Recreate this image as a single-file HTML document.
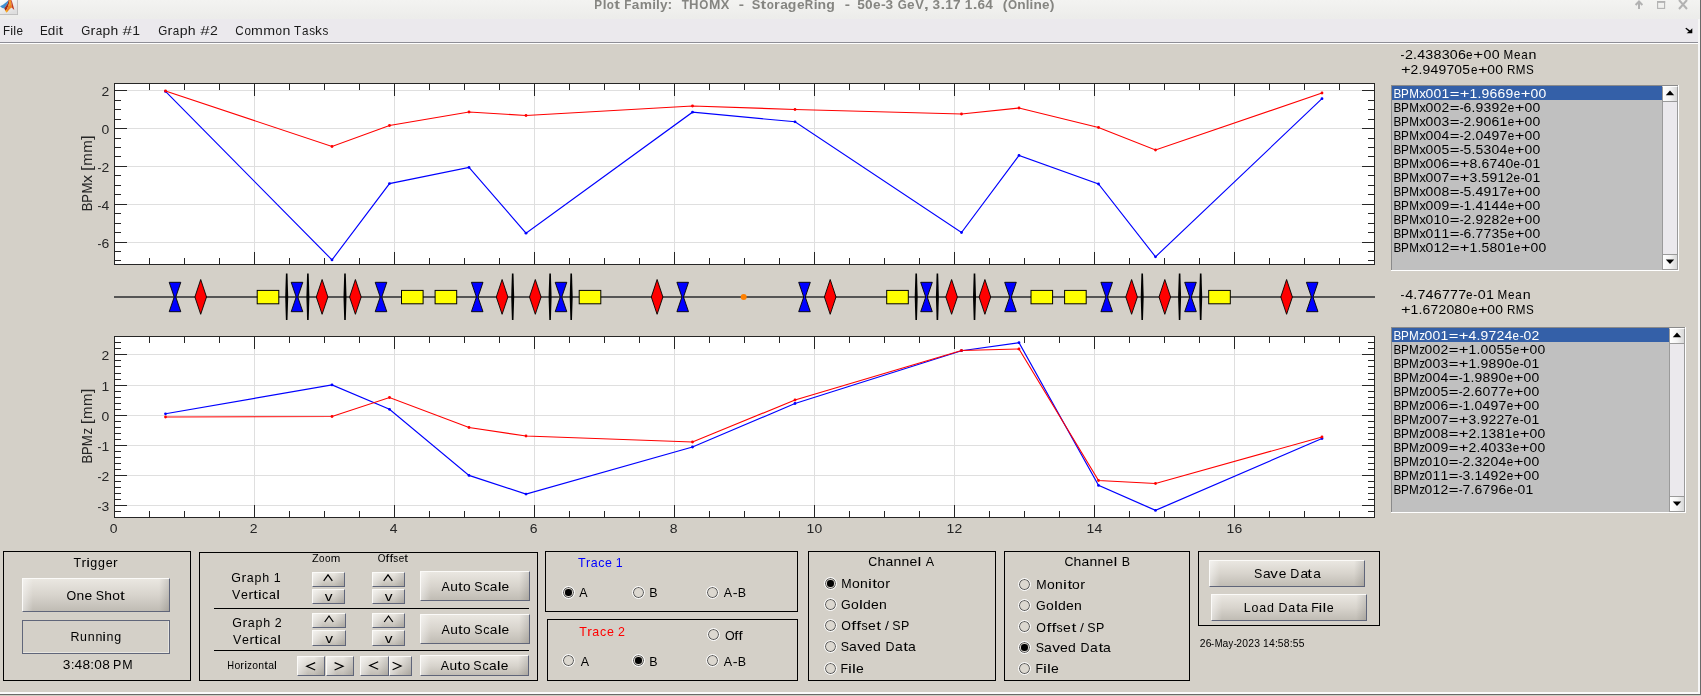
<!DOCTYPE html>
<html><head><meta charset="utf-8"><title>Plot Family</title>
<style>
html,body{margin:0;padding:0;}
body{width:1701px;height:696px;overflow:hidden;background:#d4d0c8;position:relative;font-family:"Liberation Sans",sans-serif;}
#w{position:absolute;left:0;top:0;width:1701px;height:696px;}
#txt{position:absolute;left:0;top:0;will-change:transform;font-family:"Liberation Sans",sans-serif;white-space:pre;}
#txt text{white-space:pre;}
#title{position:absolute;left:0;top:0;width:1701px;height:19px;background:linear-gradient(#f3f3f1,#ececea);}
#menu{position:absolute;left:0;top:19px;width:1700px;height:23px;background:#ebe9ed;}
#menuline{position:absolute;left:0;top:42px;width:1698px;height:1px;background:#8e8e96;}
#menuline2{position:absolute;left:0;top:43px;width:1698px;height:1px;background:#fff;}
.btn{box-sizing:border-box;border:1px solid;border-color:#fbfaf8 #5f6579 #5f6579 #fbfaf8;
 background:linear-gradient(90deg,rgba(255,255,255,.45),rgba(255,255,255,0) 10px,rgba(0,0,0,0) calc(100% - 10px),rgba(0,0,0,.12)),linear-gradient(#eae7e1,#d7d3cc 52%,#c0bcb4);}
.rad{position:absolute;width:13px;height:13px;box-sizing:border-box;border-radius:50%;border:1px solid #fff;background:#dcd8d0;box-shadow:inset 0 0 0 1px #5c5c5c;}
.rad i{position:absolute;left:2.3px;top:2.3px;width:6.4px;height:6.4px;border-radius:50%;background:#000;}
</style></head>
<body>
<div id="title"></div>
<div id="menu"></div><div id="menuline"></div><div id="menuline2"></div>
<svg style="position:absolute;left:0;top:0" width="20" height="16" viewBox="0 0 20 16">
<defs><linearGradient id="ig" x1="0" y1="0" x2="0.6" y2="1"><stop offset="0" stop-color="#ffffff"/><stop offset="1" stop-color="#dedede"/></linearGradient></defs>
<rect x="0" y="0" width="18" height="15" fill="#b9b9b9"/><rect x="0" y="0" width="17.2" height="14.2" fill="url(#ig)"/>
<path d="M0 6.2 L3 4.8 L6.5 2 L8.6 0 L8 3 L6 6 L4.5 8.6 L2.2 8 Z" fill="#3f8fd2"/>
<path d="M4.3 8.6 L6 6 L8 3 L8.6 0 H9.7 L8.6 5 L7 9 L5.6 11 Z" fill="#9e2718"/>
<path d="M5.4 10.8 L7 9 L8.6 5 L9.6 0 H10.9 L11.5 4 L12.1 7.6 L10.2 8.4 L8 11 L6.5 12.6 Z" fill="#ee7f22"/>
<path d="M9.4 1 L10.4 1 L10.6 5 L9.2 6 Z" fill="#f3ae2c"/>
<path d="M5.3 10.6 L6.5 12.6 L7.6 11.3 L6.6 10 Z" fill="#f6b31e"/>
<path d="M10.9 0 L11.7 0.6 L13 5 L14.3 9.8 L13 9 L12.1 7.6 L11.5 4 Z" fill="#c23a23"/>
</svg>
<svg style="position:absolute;left:1620px;top:0" width="81" height="18" viewBox="1620 0 81 18">
<g stroke="#b2b2b2" stroke-width="2" fill="none">
<path d="M1639 9 V1.5 M1635.6 5 L1639 1.5 L1642.4 5"/>
<rect x="1657.6" y="1.8" width="7" height="6.6" stroke-width="1.1"/><path d="M1657 1.9 H1665.2" stroke-width="1.8"/>
<path d="M1679 0 L1687 9 M1687 0 L1679 9"/>
</g></svg>
<svg style="position:absolute;left:1683px;top:26px" width="12" height="10" viewBox="1683 26 12 10"><path d="M1685.3 28.6 L1686.3 27.8 L1690 30.6 L1692.3 28.2 V33.2 H1686.6 L1688.8 31.6 Z" fill="#000"/></svg>
<svg style="position:absolute;left:0;top:0" width="1701" height="696" viewBox="0 0 1701 696">
<rect x="114.5" y="83.5" width="1260.0" height="181.0" fill="#fff"/>
<path d="M254.5 83.5 V264.5 M394.5 83.5 V264.5 M534.5 83.5 V264.5 M674.5 83.5 V264.5 M814.5 83.5 V264.5 M954.5 83.5 V264.5 M1094.5 83.5 V264.5 M1234.5 83.5 V264.5 M114.5 90.5 H1374.5 M114.5 128.5 H1374.5 M114.5 166.5 H1374.5 M114.5 204.5 H1374.5 M114.5 242.5 H1374.5" stroke="#dfdfdf" stroke-width="1" fill="none" shape-rendering="crispEdges"/>
<path d="M149.5 83.5 v6.5 M149.5 264.5 v-6.5 M184.5 83.5 v6.5 M184.5 264.5 v-6.5 M219.5 83.5 v6.5 M219.5 264.5 v-6.5 M254.5 83.5 v12.5 M254.5 264.5 v-12.5 M289.5 83.5 v6.5 M289.5 264.5 v-6.5 M324.5 83.5 v6.5 M324.5 264.5 v-6.5 M359.5 83.5 v6.5 M359.5 264.5 v-6.5 M394.5 83.5 v12.5 M394.5 264.5 v-12.5 M429.5 83.5 v6.5 M429.5 264.5 v-6.5 M464.5 83.5 v6.5 M464.5 264.5 v-6.5 M499.5 83.5 v6.5 M499.5 264.5 v-6.5 M534.5 83.5 v12.5 M534.5 264.5 v-12.5 M569.5 83.5 v6.5 M569.5 264.5 v-6.5 M604.5 83.5 v6.5 M604.5 264.5 v-6.5 M639.5 83.5 v6.5 M639.5 264.5 v-6.5 M674.5 83.5 v12.5 M674.5 264.5 v-12.5 M709.5 83.5 v6.5 M709.5 264.5 v-6.5 M744.5 83.5 v6.5 M744.5 264.5 v-6.5 M779.5 83.5 v6.5 M779.5 264.5 v-6.5 M814.5 83.5 v12.5 M814.5 264.5 v-12.5 M849.5 83.5 v6.5 M849.5 264.5 v-6.5 M884.5 83.5 v6.5 M884.5 264.5 v-6.5 M919.5 83.5 v6.5 M919.5 264.5 v-6.5 M954.5 83.5 v12.5 M954.5 264.5 v-12.5 M989.5 83.5 v6.5 M989.5 264.5 v-6.5 M1024.5 83.5 v6.5 M1024.5 264.5 v-6.5 M1059.5 83.5 v6.5 M1059.5 264.5 v-6.5 M1094.5 83.5 v12.5 M1094.5 264.5 v-12.5 M1129.5 83.5 v6.5 M1129.5 264.5 v-6.5 M1164.5 83.5 v6.5 M1164.5 264.5 v-6.5 M1199.5 83.5 v6.5 M1199.5 264.5 v-6.5 M1234.5 83.5 v12.5 M1234.5 264.5 v-12.5 M1269.5 83.5 v6.5 M1269.5 264.5 v-6.5 M1304.5 83.5 v6.5 M1304.5 264.5 v-6.5 M1339.5 83.5 v6.5 M1339.5 264.5 v-6.5 M114.5 260.5 h6.5 M1374.5 260.5 h-6.5 M114.5 251.5 h6.5 M1374.5 251.5 h-6.5 M114.5 242.5 h12.5 M1374.5 242.5 h-12.5 M114.5 232.5 h6.5 M1374.5 232.5 h-6.5 M114.5 223.5 h6.5 M1374.5 223.5 h-6.5 M114.5 213.5 h6.5 M1374.5 213.5 h-6.5 M114.5 204.5 h12.5 M1374.5 204.5 h-12.5 M114.5 194.5 h6.5 M1374.5 194.5 h-6.5 M114.5 185.5 h6.5 M1374.5 185.5 h-6.5 M114.5 175.5 h6.5 M1374.5 175.5 h-6.5 M114.5 166.5 h12.5 M1374.5 166.5 h-12.5 M114.5 156.5 h6.5 M1374.5 156.5 h-6.5 M114.5 147.5 h6.5 M1374.5 147.5 h-6.5 M114.5 138.5 h6.5 M1374.5 138.5 h-6.5 M114.5 128.5 h12.5 M1374.5 128.5 h-12.5 M114.5 119.5 h6.5 M1374.5 119.5 h-6.5 M114.5 109.5 h6.5 M1374.5 109.5 h-6.5 M114.5 100.5 h6.5 M1374.5 100.5 h-6.5 M114.5 90.5 h12.5 M1374.5 90.5 h-12.5" stroke="#262626" stroke-width="1" fill="none" shape-rendering="crispEdges"/>
<rect x="114.5" y="83.5" width="1260.0" height="181.0" fill="none" stroke="#262626" stroke-width="1" shape-rendering="crispEdges"/>
<polyline points="165.5,91.4 332.0,259.9 389.5,183.6 469.0,167.4 526.0,233.2 692.5,112.2 795.0,121.8 961.5,232.5 1019.0,155.4 1098.5,184.0 1155.5,256.8 1322.0,98.7" fill="none" stroke="#0000ff" stroke-width="1.15"/><circle cx="165.5" cy="91.4" r="1.4" fill="#0000ff"/><circle cx="332.0" cy="259.9" r="1.4" fill="#0000ff"/><circle cx="389.5" cy="183.6" r="1.4" fill="#0000ff"/><circle cx="469.0" cy="167.4" r="1.4" fill="#0000ff"/><circle cx="526.0" cy="233.2" r="1.4" fill="#0000ff"/><circle cx="692.5" cy="112.2" r="1.4" fill="#0000ff"/><circle cx="795.0" cy="121.8" r="1.4" fill="#0000ff"/><circle cx="961.5" cy="232.5" r="1.4" fill="#0000ff"/><circle cx="1019.0" cy="155.4" r="1.4" fill="#0000ff"/><circle cx="1098.5" cy="184.0" r="1.4" fill="#0000ff"/><circle cx="1155.5" cy="256.8" r="1.4" fill="#0000ff"/><circle cx="1322.0" cy="98.7" r="1.4" fill="#0000ff"/>
<polyline points="165.5,91.0 332.0,146.5 389.5,125.5 469.0,112.0 526.0,115.5 692.5,106.0 795.0,109.5 961.5,114.0 1019.0,108.0 1098.5,127.5 1155.5,150.0 1322.0,93.0" fill="none" stroke="#ff0000" stroke-width="1.15"/><circle cx="165.5" cy="91.0" r="1.4" fill="#ff0000"/><circle cx="332.0" cy="146.5" r="1.4" fill="#ff0000"/><circle cx="389.5" cy="125.5" r="1.4" fill="#ff0000"/><circle cx="469.0" cy="112.0" r="1.4" fill="#ff0000"/><circle cx="526.0" cy="115.5" r="1.4" fill="#ff0000"/><circle cx="692.5" cy="106.0" r="1.4" fill="#ff0000"/><circle cx="795.0" cy="109.5" r="1.4" fill="#ff0000"/><circle cx="961.5" cy="114.0" r="1.4" fill="#ff0000"/><circle cx="1019.0" cy="108.0" r="1.4" fill="#ff0000"/><circle cx="1098.5" cy="127.5" r="1.4" fill="#ff0000"/><circle cx="1155.5" cy="150.0" r="1.4" fill="#ff0000"/><circle cx="1322.0" cy="93.0" r="1.4" fill="#ff0000"/>
<rect x="114.5" y="336.5" width="1260.0" height="181.0" fill="#fff"/>
<path d="M254.5 336.5 V517.5 M394.5 336.5 V517.5 M534.5 336.5 V517.5 M674.5 336.5 V517.5 M814.5 336.5 V517.5 M954.5 336.5 V517.5 M1094.5 336.5 V517.5 M1234.5 336.5 V517.5 M114.5 354.5 H1374.5 M114.5 385.5 H1374.5 M114.5 415.5 H1374.5 M114.5 445.5 H1374.5 M114.5 475.5 H1374.5 M114.5 505.5 H1374.5" stroke="#dfdfdf" stroke-width="1" fill="none" shape-rendering="crispEdges"/>
<path d="M149.5 336.5 v6.5 M149.5 517.5 v-6.5 M184.5 336.5 v6.5 M184.5 517.5 v-6.5 M219.5 336.5 v6.5 M219.5 517.5 v-6.5 M254.5 336.5 v12.5 M254.5 517.5 v-12.5 M289.5 336.5 v6.5 M289.5 517.5 v-6.5 M324.5 336.5 v6.5 M324.5 517.5 v-6.5 M359.5 336.5 v6.5 M359.5 517.5 v-6.5 M394.5 336.5 v12.5 M394.5 517.5 v-12.5 M429.5 336.5 v6.5 M429.5 517.5 v-6.5 M464.5 336.5 v6.5 M464.5 517.5 v-6.5 M499.5 336.5 v6.5 M499.5 517.5 v-6.5 M534.5 336.5 v12.5 M534.5 517.5 v-12.5 M569.5 336.5 v6.5 M569.5 517.5 v-6.5 M604.5 336.5 v6.5 M604.5 517.5 v-6.5 M639.5 336.5 v6.5 M639.5 517.5 v-6.5 M674.5 336.5 v12.5 M674.5 517.5 v-12.5 M709.5 336.5 v6.5 M709.5 517.5 v-6.5 M744.5 336.5 v6.5 M744.5 517.5 v-6.5 M779.5 336.5 v6.5 M779.5 517.5 v-6.5 M814.5 336.5 v12.5 M814.5 517.5 v-12.5 M849.5 336.5 v6.5 M849.5 517.5 v-6.5 M884.5 336.5 v6.5 M884.5 517.5 v-6.5 M919.5 336.5 v6.5 M919.5 517.5 v-6.5 M954.5 336.5 v12.5 M954.5 517.5 v-12.5 M989.5 336.5 v6.5 M989.5 517.5 v-6.5 M1024.5 336.5 v6.5 M1024.5 517.5 v-6.5 M1059.5 336.5 v6.5 M1059.5 517.5 v-6.5 M1094.5 336.5 v12.5 M1094.5 517.5 v-12.5 M1129.5 336.5 v6.5 M1129.5 517.5 v-6.5 M1164.5 336.5 v6.5 M1164.5 517.5 v-6.5 M1199.5 336.5 v6.5 M1199.5 517.5 v-6.5 M1234.5 336.5 v12.5 M1234.5 517.5 v-12.5 M1269.5 336.5 v6.5 M1269.5 517.5 v-6.5 M1304.5 336.5 v6.5 M1304.5 517.5 v-6.5 M1339.5 336.5 v6.5 M1339.5 517.5 v-6.5 M114.5 511.5 h6.5 M1374.5 511.5 h-6.5 M114.5 505.5 h12.5 M1374.5 505.5 h-12.5 M114.5 499.5 h6.5 M1374.5 499.5 h-6.5 M114.5 493.5 h6.5 M1374.5 493.5 h-6.5 M114.5 487.5 h6.5 M1374.5 487.5 h-6.5 M114.5 481.5 h6.5 M1374.5 481.5 h-6.5 M114.5 475.5 h12.5 M1374.5 475.5 h-12.5 M114.5 469.5 h6.5 M1374.5 469.5 h-6.5 M114.5 463.5 h6.5 M1374.5 463.5 h-6.5 M114.5 457.5 h6.5 M1374.5 457.5 h-6.5 M114.5 451.5 h6.5 M1374.5 451.5 h-6.5 M114.5 445.5 h12.5 M1374.5 445.5 h-12.5 M114.5 439.5 h6.5 M1374.5 439.5 h-6.5 M114.5 433.5 h6.5 M1374.5 433.5 h-6.5 M114.5 427.5 h6.5 M1374.5 427.5 h-6.5 M114.5 421.5 h6.5 M1374.5 421.5 h-6.5 M114.5 415.5 h12.5 M1374.5 415.5 h-12.5 M114.5 409.5 h6.5 M1374.5 409.5 h-6.5 M114.5 403.5 h6.5 M1374.5 403.5 h-6.5 M114.5 397.5 h6.5 M1374.5 397.5 h-6.5 M114.5 391.5 h6.5 M1374.5 391.5 h-6.5 M114.5 385.5 h12.5 M1374.5 385.5 h-12.5 M114.5 379.5 h6.5 M1374.5 379.5 h-6.5 M114.5 373.5 h6.5 M1374.5 373.5 h-6.5 M114.5 366.5 h6.5 M1374.5 366.5 h-6.5 M114.5 360.5 h6.5 M1374.5 360.5 h-6.5 M114.5 354.5 h12.5 M1374.5 354.5 h-12.5 M114.5 348.5 h6.5 M1374.5 348.5 h-6.5 M114.5 342.5 h6.5 M1374.5 342.5 h-6.5" stroke="#262626" stroke-width="1" fill="none" shape-rendering="crispEdges"/>
<rect x="114.5" y="336.5" width="1260.0" height="181.0" fill="none" stroke="#262626" stroke-width="1" shape-rendering="crispEdges"/>
<polyline points="165.5,413.8 332.0,384.9 389.5,409.3 469.0,475.4 526.0,494.1 692.5,447.0 795.0,403.5 961.5,350.7 1019.0,342.7 1098.5,485.4 1155.5,510.4 1322.0,438.5" fill="none" stroke="#0000ff" stroke-width="1.15"/><circle cx="165.5" cy="413.8" r="1.4" fill="#0000ff"/><circle cx="332.0" cy="384.9" r="1.4" fill="#0000ff"/><circle cx="389.5" cy="409.3" r="1.4" fill="#0000ff"/><circle cx="469.0" cy="475.4" r="1.4" fill="#0000ff"/><circle cx="526.0" cy="494.1" r="1.4" fill="#0000ff"/><circle cx="692.5" cy="447.0" r="1.4" fill="#0000ff"/><circle cx="795.0" cy="403.5" r="1.4" fill="#0000ff"/><circle cx="961.5" cy="350.7" r="1.4" fill="#0000ff"/><circle cx="1019.0" cy="342.7" r="1.4" fill="#0000ff"/><circle cx="1098.5" cy="485.4" r="1.4" fill="#0000ff"/><circle cx="1155.5" cy="510.4" r="1.4" fill="#0000ff"/><circle cx="1322.0" cy="438.5" r="1.4" fill="#0000ff"/>
<polyline points="165.5,417.0 332.0,416.5 389.5,397.5 469.0,427.5 526.0,436.0 692.5,442.0 795.0,400.0 961.5,350.5 1019.0,349.0 1098.5,480.5 1155.5,483.5 1322.0,437.0" fill="none" stroke="#ff0000" stroke-width="1.15"/><circle cx="165.5" cy="417.0" r="1.4" fill="#ff0000"/><circle cx="332.0" cy="416.5" r="1.4" fill="#ff0000"/><circle cx="389.5" cy="397.5" r="1.4" fill="#ff0000"/><circle cx="469.0" cy="427.5" r="1.4" fill="#ff0000"/><circle cx="526.0" cy="436.0" r="1.4" fill="#ff0000"/><circle cx="692.5" cy="442.0" r="1.4" fill="#ff0000"/><circle cx="795.0" cy="400.0" r="1.4" fill="#ff0000"/><circle cx="961.5" cy="350.5" r="1.4" fill="#ff0000"/><circle cx="1019.0" cy="349.0" r="1.4" fill="#ff0000"/><circle cx="1098.5" cy="480.5" r="1.4" fill="#ff0000"/><circle cx="1155.5" cy="483.5" r="1.4" fill="#ff0000"/><circle cx="1322.0" cy="437.0" r="1.4" fill="#ff0000"/>
<path d="M114 297 H1375" stroke="#555" stroke-width="2" fill="none"/>
<path d="M169.2 282.3 H180.8 L175.8 297 L180.8 311.7 H169.2 L174.2 297 Z" fill="#0000ff" stroke="#000" stroke-width="0.9"/>
<path d="M200.7 279.5 L206.5 297 L200.7 314.3 L194.9 297 Z" fill="#ff0000" stroke="#000" stroke-width="0.9"/>
<rect x="257.2" y="290.4" width="21.6" height="13.4" fill="#ffff00" stroke="#000" stroke-width="1"/>
<path d="M291.2 282.3 H302.8 L297.8 297 L302.8 311.7 H291.2 L296.2 297 Z" fill="#0000ff" stroke="#000" stroke-width="0.9"/>
<path d="M322.1 279.5 L327.9 297 L322.1 314.3 L316.3 297 Z" fill="#ff0000" stroke="#000" stroke-width="0.9"/>
<path d="M355.4 279.5 L361.2 297 L355.4 314.3 L349.6 297 Z" fill="#ff0000" stroke="#000" stroke-width="0.9"/>
<path d="M375.2 282.3 H386.8 L381.8 297 L386.8 311.7 H375.2 L380.2 297 Z" fill="#0000ff" stroke="#000" stroke-width="0.9"/>
<rect x="401.5" y="290.4" width="21.6" height="13.4" fill="#ffff00" stroke="#000" stroke-width="1"/>
<rect x="435.1" y="290.4" width="21.6" height="13.4" fill="#ffff00" stroke="#000" stroke-width="1"/>
<path d="M471.4 282.3 H483.0 L478.0 297 L483.0 311.7 H471.4 L476.4 297 Z" fill="#0000ff" stroke="#000" stroke-width="0.9"/>
<path d="M502.1 279.5 L507.9 297 L502.1 314.3 L496.3 297 Z" fill="#ff0000" stroke="#000" stroke-width="0.9"/>
<path d="M535.3 279.5 L541.1 297 L535.3 314.3 L529.5 297 Z" fill="#ff0000" stroke="#000" stroke-width="0.9"/>
<path d="M555.2 282.3 H566.8 L561.8 297 L566.8 311.7 H555.2 L560.2 297 Z" fill="#0000ff" stroke="#000" stroke-width="0.9"/>
<rect x="579.2" y="290.4" width="21.6" height="13.4" fill="#ffff00" stroke="#000" stroke-width="1"/>
<path d="M657.1 279.5 L662.9 297 L657.1 314.3 L651.3 297 Z" fill="#ff0000" stroke="#000" stroke-width="0.9"/>
<path d="M676.9 282.3 H688.5 L683.5 297 L688.5 311.7 H676.9 L681.9 297 Z" fill="#0000ff" stroke="#000" stroke-width="0.9"/>
<path d="M798.7 282.3 H810.3 L805.3 297 L810.3 311.7 H798.7 L803.7 297 Z" fill="#0000ff" stroke="#000" stroke-width="0.9"/>
<path d="M830.2 279.5 L836.0 297 L830.2 314.3 L824.4 297 Z" fill="#ff0000" stroke="#000" stroke-width="0.9"/>
<rect x="886.7" y="290.4" width="21.6" height="13.4" fill="#ffff00" stroke="#000" stroke-width="1"/>
<path d="M920.7 282.3 H932.3 L927.3 297 L932.3 311.7 H920.7 L925.7 297 Z" fill="#0000ff" stroke="#000" stroke-width="0.9"/>
<path d="M951.6 279.5 L957.4 297 L951.6 314.3 L945.8 297 Z" fill="#ff0000" stroke="#000" stroke-width="0.9"/>
<path d="M984.9 279.5 L990.7 297 L984.9 314.3 L979.1 297 Z" fill="#ff0000" stroke="#000" stroke-width="0.9"/>
<path d="M1004.7 282.3 H1016.3 L1011.3 297 L1016.3 311.7 H1004.7 L1009.7 297 Z" fill="#0000ff" stroke="#000" stroke-width="0.9"/>
<rect x="1031.0" y="290.4" width="21.6" height="13.4" fill="#ffff00" stroke="#000" stroke-width="1"/>
<rect x="1064.6" y="290.4" width="21.6" height="13.4" fill="#ffff00" stroke="#000" stroke-width="1"/>
<path d="M1100.9 282.3 H1112.5 L1107.5 297 L1112.5 311.7 H1100.9 L1105.9 297 Z" fill="#0000ff" stroke="#000" stroke-width="0.9"/>
<path d="M1131.6 279.5 L1137.4 297 L1131.6 314.3 L1125.8 297 Z" fill="#ff0000" stroke="#000" stroke-width="0.9"/>
<path d="M1164.8 279.5 L1170.6 297 L1164.8 314.3 L1159.0 297 Z" fill="#ff0000" stroke="#000" stroke-width="0.9"/>
<path d="M1184.7 282.3 H1196.3 L1191.3 297 L1196.3 311.7 H1184.7 L1189.7 297 Z" fill="#0000ff" stroke="#000" stroke-width="0.9"/>
<rect x="1208.7" y="290.4" width="21.6" height="13.4" fill="#ffff00" stroke="#000" stroke-width="1"/>
<path d="M1286.6 279.5 L1292.4 297 L1286.6 314.3 L1280.8 297 Z" fill="#ff0000" stroke="#000" stroke-width="0.9"/>
<path d="M1306.4 282.3 H1318.0 L1313.0 297 L1318.0 311.7 H1306.4 L1311.4 297 Z" fill="#0000ff" stroke="#000" stroke-width="0.9"/>
<path d="M285.9 273.5 H287.5 L288.2 297 L287.5 320 H285.9 L285.2 297 Z" fill="#000"/>
<path d="M307.1 273.5 H308.7 L309.4 297 L308.7 320 H307.1 L306.4 297 Z" fill="#000"/>
<path d="M344.2 273.5 H345.8 L346.5 297 L345.8 320 H344.2 L343.5 297 Z" fill="#000"/>
<path d="M511.9 273.5 H513.5 L514.2 297 L513.5 320 H511.9 L511.2 297 Z" fill="#000"/>
<path d="M549.3 273.5 H550.9 L551.6 297 L550.9 320 H549.3 L548.6 297 Z" fill="#000"/>
<path d="M570.4 273.5 H572.0 L572.7 297 L572.0 320 H570.4 L569.7 297 Z" fill="#000"/>
<path d="M915.4 273.5 H917.0 L917.7 297 L917.0 320 H915.4 L914.7 297 Z" fill="#000"/>
<path d="M936.6 273.5 H938.2 L938.9 297 L938.2 320 H936.6 L935.9 297 Z" fill="#000"/>
<path d="M973.7 273.5 H975.3 L976.0 297 L975.3 320 H973.7 L973.0 297 Z" fill="#000"/>
<path d="M1141.4 273.5 H1143.0 L1143.7 297 L1143.0 320 H1141.4 L1140.7 297 Z" fill="#000"/>
<path d="M1178.8 273.5 H1180.4 L1181.1 297 L1180.4 320 H1178.8 L1178.1 297 Z" fill="#000"/>
<path d="M1199.9 273.5 H1201.5 L1202.2 297 L1201.5 320 H1199.9 L1199.2 297 Z" fill="#000"/>
<circle cx="743.7" cy="297" r="3" fill="#ff8000"/>
</svg>
<div style="position:absolute;left:1391px;top:85px;width:288px;height:186px;background:#fff;"></div>
<div style="position:absolute;left:1391px;top:85px;width:287px;height:185px;background:#8a8a8a;"></div>
<div style="position:absolute;left:1392px;top:86px;width:286px;height:184px;background:#c0c0c0;"></div>
<div style="position:absolute;left:1392px;top:86px;width:270px;height:14px;background:#3460a8;"></div>
<div style="position:absolute;left:1662px;top:86px;width:16px;height:184px;background:#ebe9ed;border-left:1px solid #9a9a9a;border-right:1px solid #9a9a9a;box-sizing:border-box;"></div>
<div style="position:absolute;left:1662px;top:86px;width:16px;height:16px;background:linear-gradient(90deg,#fff,#f4f4f4 50%,#d8d8d8);border:1px solid #9a9a9a;border-top-color:#fff;box-sizing:border-box;"></div>
<div style="position:absolute;left:1662px;top:254px;width:16px;height:16px;background:linear-gradient(90deg,#fff,#f4f4f4 50%,#d8d8d8);border:1px solid #9a9a9a;box-sizing:border-box;"></div>
<svg style="position:absolute;left:1662px;top:85px" width="16" height="185"><path d="M3.8 10.2 L8 5.6 L12.2 10.2 Z" fill="#000"/><path d="M3.8 174.4 L8 179 L12.2 174.4 Z" fill="#000"/></svg>
<div style="position:absolute;left:1391px;top:327px;width:295px;height:186px;background:#fff;"></div>
<div style="position:absolute;left:1391px;top:327px;width:294px;height:185px;background:#8a8a8a;"></div>
<div style="position:absolute;left:1392px;top:328px;width:293px;height:184px;background:#c0c0c0;"></div>
<div style="position:absolute;left:1392px;top:328px;width:277px;height:14px;background:#3460a8;"></div>
<div style="position:absolute;left:1669px;top:328px;width:16px;height:184px;background:#ebe9ed;border-left:1px solid #9a9a9a;border-right:1px solid #9a9a9a;box-sizing:border-box;"></div>
<div style="position:absolute;left:1669px;top:328px;width:16px;height:16px;background:linear-gradient(90deg,#fff,#f4f4f4 50%,#d8d8d8);border:1px solid #9a9a9a;border-top-color:#fff;box-sizing:border-box;"></div>
<div style="position:absolute;left:1669px;top:496px;width:16px;height:16px;background:linear-gradient(90deg,#fff,#f4f4f4 50%,#d8d8d8);border:1px solid #9a9a9a;box-sizing:border-box;"></div>
<svg style="position:absolute;left:1669px;top:327px" width="16" height="185"><path d="M3.8 10.2 L8 5.6 L12.2 10.2 Z" fill="#000"/><path d="M3.8 174.4 L8 179 L12.2 174.4 Z" fill="#000"/></svg>
<div style="position:absolute;left:3px;top:551px;width:188px;height:130px;border:1px solid #000;box-sizing:border-box;"></div>
<div class="btn" style="position:absolute;left:22px;top:578px;width:148px;height:34px;"></div>
<div style="position:absolute;left:22px;top:620px;width:148px;height:34px;border:1px solid #60667a;box-sizing:border-box;box-shadow:inset -1px -1px 0 #e8e6e0;"></div>
<div style="position:absolute;left:199px;top:552px;width:339px;height:129px;border:1px solid #000;box-sizing:border-box;"></div>
<div class="btn" style="position:absolute;left:312px;top:572px;width:33px;height:15px;"></div>
<div class="btn" style="position:absolute;left:312px;top:589px;width:33px;height:15px;"></div>
<div class="btn" style="position:absolute;left:372px;top:572px;width:33px;height:15px;"></div>
<div class="btn" style="position:absolute;left:372px;top:589px;width:33px;height:15px;"></div>
<div class="btn" style="position:absolute;left:420px;top:571px;width:110px;height:30px;"></div>
<div style="position:absolute;left:214px;top:608px;width:315px;height:1px;background:#000;"></div>
<div class="btn" style="position:absolute;left:312px;top:613px;width:34px;height:15px;"></div>
<div class="btn" style="position:absolute;left:312px;top:630px;width:34px;height:16px;"></div>
<div class="btn" style="position:absolute;left:372px;top:613px;width:33px;height:15px;"></div>
<div class="btn" style="position:absolute;left:372px;top:630px;width:33px;height:16px;"></div>
<div class="btn" style="position:absolute;left:420px;top:614px;width:110px;height:30px;"></div>
<div style="position:absolute;left:214px;top:650px;width:315px;height:1px;background:#000;"></div>
<div class="btn" style="position:absolute;left:297px;top:656px;width:28px;height:20px;"></div>
<div class="btn" style="position:absolute;left:326px;top:656px;width:28px;height:20px;"></div>
<div class="btn" style="position:absolute;left:360px;top:656px;width:29px;height:20px;"></div>
<div class="btn" style="position:absolute;left:389px;top:656px;width:23px;height:20px;"></div>
<div class="btn" style="position:absolute;left:420px;top:655px;width:109px;height:21px;"></div>
<svg style="position:absolute;left:0;top:0" width="1701" height="696" viewBox="0 0 1701 696"><path d="M323.7 580.8 L328.0 574.8 L332.3 580.8 M383.7 580.8 L388.0 574.8 L392.3 580.8 M324.7 622.0 L329.0 616.0 L333.3 622.0 M384.2 622.0 L388.5 616.0 L392.8 622.0 M315.2 662.6 L306.8 666.3 L315.2 670.0 M334.6 662.6 L343.0 666.3 L334.6 670.0 M378.2 661.8 L369.8 665.5 L378.2 669.2 M392.6 662.3 L401.0 666.0 L392.6 669.7" fill="none" stroke="#000" stroke-width="1.25" stroke-linejoin="miter"/></svg>
<div style="position:absolute;left:545px;top:551px;width:253px;height:61px;border:1px solid #000;box-sizing:border-box;"></div>
<div class="rad" style="left:562px;top:586px"><i></i></div>
<div class="rad" style="left:632px;top:586px"></div>
<div class="rad" style="left:706px;top:586px"></div>
<div style="position:absolute;left:547px;top:619px;width:251px;height:62px;border:1px solid #000;box-sizing:border-box;"></div>
<div class="rad" style="left:707px;top:628px"></div>
<div class="rad" style="left:562px;top:654px"></div>
<div class="rad" style="left:632px;top:654px"><i></i></div>
<div class="rad" style="left:706px;top:654px"></div>
<div style="position:absolute;left:808px;top:551px;width:188px;height:130px;border:1px solid #000;box-sizing:border-box;"></div>
<div class="rad" style="left:824px;top:577px"><i></i></div>
<div class="rad" style="left:824px;top:598px"></div>
<div class="rad" style="left:824px;top:619px"></div>
<div class="rad" style="left:824px;top:640px"></div>
<div class="rad" style="left:824px;top:662px"></div>
<div style="position:absolute;left:1004px;top:551px;width:186px;height:130px;border:1px solid #000;box-sizing:border-box;"></div>
<div class="rad" style="left:1018px;top:578px"></div>
<div class="rad" style="left:1018px;top:599px"></div>
<div class="rad" style="left:1018px;top:620px"></div>
<div class="rad" style="left:1018px;top:641px"><i></i></div>
<div class="rad" style="left:1018px;top:662px"></div>
<div style="position:absolute;left:1198px;top:551px;width:182px;height:75px;border:1px solid #000;box-sizing:border-box;"></div>
<div class="btn" style="position:absolute;left:1209px;top:560px;width:156px;height:27px;"></div>
<div class="btn" style="position:absolute;left:1211px;top:594px;width:156px;height:27px;"></div>
<div style="position:absolute;left:1698px;top:19px;width:2px;height:675px;background:#f6f6f6;"></div>
<div style="position:absolute;left:0px;top:692px;width:1700px;height:2px;background:#fafafa;"></div>
<div style="position:absolute;left:1700px;top:0px;width:1px;height:696px;background:#6a6a6a;"></div>
<div style="position:absolute;left:0px;top:694px;width:1701px;height:1px;background:#6a6a6a;"></div>
<div style="position:absolute;left:0px;top:695px;width:1701px;height:1px;background:#cfcec2;"></div>
<svg id="txt" width="1701" height="696" viewBox="0 0 1701 696" font-size="13.1">
<text x="667.59" y="9" fill="#858581" font-weight="bold" transform="scale(0.890,1)">P</text>
<text x="581.72" y="9" fill="#858581" font-weight="bold" transform="scale(1.036,1)">l</text>
<text x="681.73" y="9" fill="#858581" font-weight="bold" transform="scale(0.890,1)">o</text>
<text x="474.30" y="9" fill="#858581" font-weight="bold" transform="scale(1.295,1)">t</text>
<text x="701.28" y="9" fill="#858581" font-weight="bold" transform="scale(0.890,1)">F</text>
<text x="610.47" y="9" fill="#858581" font-weight="bold" transform="scale(1.035,1)">a</text>
<text x="608.07" y="9" fill="#858581" font-weight="bold" transform="scale(1.052,1)">m</text>
<text x="629.56" y="9" fill="#858581" font-weight="bold" transform="scale(1.036,1)">i</text>
<text x="633.31" y="9" fill="#858581" font-weight="bold" transform="scale(1.036,1)">l</text>
<text x="637.70" y="9" fill="#858581" font-weight="bold" transform="scale(1.035,1)">y</text>
<text x="618.10" y="9" fill="#858581" font-weight="bold" transform="scale(1.080,1)">:</text>
<text x="766.02" y="9" fill="#858581" font-weight="bold" transform="scale(0.890,1)">T</text>
<text x="687.03" y="9" fill="#858581" font-weight="bold" transform="scale(1.003,1)">H</text>
<text x="785.81" y="9" fill="#858581" font-weight="bold" transform="scale(0.890,1)">O</text>
<text x="679.17" y="9" fill="#858581" font-weight="bold" transform="scale(1.044,1)">M</text>
<text x="737.06" y="9" fill="#858581" font-weight="bold" transform="scale(0.978,1)">X</text>
<text x="612.59" y="9" fill="#858581" font-weight="bold" transform="scale(1.206,1)">-</text>
<text x="763.96" y="9" fill="#858581" font-weight="bold" transform="scale(0.984,1)">S</text>
<text x="587.28" y="9" fill="#858581" font-weight="bold" transform="scale(1.295,1)">t</text>
<text x="861.40" y="9" fill="#858581" font-weight="bold" transform="scale(0.890,1)">o</text>
<text x="688.70" y="9" fill="#858581" font-weight="bold" transform="scale(1.124,1)">r</text>
<text x="743.85" y="9" fill="#858581" font-weight="bold" transform="scale(1.049,1)">a</text>
<text x="733.56" y="9" fill="#858581" font-weight="bold" transform="scale(1.074,1)">g</text>
<text x="759.81" y="9" fill="#858581" font-weight="bold" transform="scale(1.049,1)">e</text>
<text x="904.26" y="9" fill="#858581" font-weight="bold" transform="scale(0.890,1)">R</text>
<text x="775.01" y="9" fill="#858581" font-weight="bold" transform="scale(1.050,1)">i</text>
<text x="761.06" y="9" fill="#858581" font-weight="bold" transform="scale(1.074,1)">n</text>
<text x="769.31" y="9" fill="#858581" font-weight="bold" transform="scale(1.074,1)">g</text>
<text x="700.44" y="9" fill="#858581" font-weight="bold" transform="scale(1.206,1)">-</text>
<text x="824.34" y="9" fill="#858581" font-weight="bold" transform="scale(1.040,1)">5</text>
<text x="831.85" y="9" fill="#858581" font-weight="bold" transform="scale(1.040,1)">0</text>
<text x="839.36" y="9" fill="#858581" font-weight="bold" transform="scale(1.040,1)">e</text>
<text x="811.30" y="9" fill="#858581" font-weight="bold" transform="scale(1.086,1)">-</text>
<text x="851.56" y="9" fill="#858581" font-weight="bold" transform="scale(1.040,1)">3</text>
<text x="1008.76" y="9" fill="#858581" font-weight="bold" transform="scale(0.890,1)">G</text>
<text x="872.22" y="9" fill="#858581" font-weight="bold" transform="scale(1.040,1)">e</text>
<text x="937.85" y="9" fill="#858581" font-weight="bold" transform="scale(0.976,1)">V</text>
<text x="713.46" y="9" fill="#858581" font-weight="bold" transform="scale(1.295,1)">,</text>
<text x="896.63" y="9" fill="#858581" font-weight="bold" transform="scale(1.040,1)">3</text>
<text x="726.28" y="9" fill="#858581" font-weight="bold" transform="scale(1.295,1)">.</text>
<text x="908.83" y="9" fill="#858581" font-weight="bold" transform="scale(1.040,1)">1</text>
<text x="916.35" y="9" fill="#858581" font-weight="bold" transform="scale(1.040,1)">7</text>
<text x="927.61" y="9" fill="#858581" font-weight="bold" transform="scale(1.040,1)">1</text>
<text x="751.17" y="9" fill="#858581" font-weight="bold" transform="scale(1.295,1)">.</text>
<text x="939.82" y="9" fill="#858581" font-weight="bold" transform="scale(1.040,1)">6</text>
<text x="947.33" y="9" fill="#858581" font-weight="bold" transform="scale(1.040,1)">4</text>
<text x="938.04" y="9" fill="#858581" font-weight="bold" transform="scale(1.069,1)">(</text>
<text x="1132.59" y="9" fill="#858581" font-weight="bold" transform="scale(0.890,1)">O</text>
<text x="969.71" y="9" fill="#858581" font-weight="bold" transform="scale(1.049,1)">n</text>
<text x="1000.73" y="9" fill="#858581" font-weight="bold" transform="scale(1.025,1)">l</text>
<text x="1004.48" y="9" fill="#858581" font-weight="bold" transform="scale(1.025,1)">i</text>
<text x="985.29" y="9" fill="#858581" font-weight="bold" transform="scale(1.049,1)">n</text>
<text x="1017.65" y="9" fill="#858581" font-weight="bold" transform="scale(1.024,1)">e</text>
<text x="982.11" y="9" fill="#858581" font-weight="bold" transform="scale(1.069,1)">)</text>
<text x="3.29" y="35" fill="#1a1a1a" transform="scale(0.890,1)">F</text>
<text x="10.41" y="35" fill="#1a1a1a" transform="scale(0.981,1)">i</text>
<text x="13.41" y="35" fill="#1a1a1a" transform="scale(0.981,1)">l</text>
<text x="18.54" y="35" fill="#1a1a1a" transform="scale(0.890,1)">e</text>
<text x="44.83" y="35" fill="#1a1a1a" transform="scale(0.890,1)">E</text>
<text x="46.33" y="35" fill="#1a1a1a" transform="scale(1.033,1)">d</text>
<text x="62.61" y="35" fill="#1a1a1a" transform="scale(0.890,1)">i</text>
<text x="45.25" y="35" fill="#1a1a1a" transform="scale(1.293,1)">t</text>
<text x="91.19" y="35" fill="#1a1a1a" transform="scale(0.890,1)">G</text>
<text x="81.67" y="35" fill="#1a1a1a" transform="scale(1.107,1)">r</text>
<text x="107.51" y="35" fill="#1a1a1a" transform="scale(0.890,1)">a</text>
<text x="96.56" y="35" fill="#1a1a1a" transform="scale(1.061,1)">p</text>
<text x="104.07" y="35" fill="#1a1a1a" transform="scale(1.061,1)">h</text>
<text x="94.60" y="35" fill="#1a1a1a" transform="scale(1.295,1)">#</text>
<text x="124.72" y="35" fill="#1a1a1a" transform="scale(1.061,1)">1</text>
<text x="177.87" y="35" fill="#1a1a1a" transform="scale(0.890,1)">G</text>
<text x="149.27" y="35" fill="#1a1a1a" transform="scale(1.123,1)">r</text>
<text x="194.19" y="35" fill="#1a1a1a" transform="scale(0.890,1)">a</text>
<text x="167.12" y="35" fill="#1a1a1a" transform="scale(1.075,1)">p</text>
<text x="174.63" y="35" fill="#1a1a1a" transform="scale(1.075,1)">h</text>
<text x="154.55" y="35" fill="#1a1a1a" transform="scale(1.295,1)">#</text>
<text x="195.29" y="35" fill="#1a1a1a" transform="scale(1.075,1)">2</text>
<text x="264.28 274.62" y="35" fill="#1a1a1a" transform="scale(0.890,1)">Co</text>
<text x="231.42" y="35" fill="#1a1a1a" transform="scale(1.085,1)">m</text>
<text x="242.67" y="35" fill="#1a1a1a" transform="scale(1.085,1)">m</text>
<text x="309.64" y="35" fill="#1a1a1a" transform="scale(0.890,1)">o</text>
<text x="260.81" y="35" fill="#1a1a1a" transform="scale(1.083,1)">n</text>
<text x="330.43 339.27 347.43" y="35" fill="#1a1a1a" transform="scale(0.890,1)">Tas</text>
<text x="298.83" y="35" fill="#1a1a1a" transform="scale(1.054,1)">k</text>
<text x="362.28" y="35" fill="#1a1a1a" transform="scale(0.890,1)">s</text>
<text x="95.41" y="96" fill="#262626" transform="scale(1.065,1)">2</text>
<text x="95.41" y="134" fill="#262626" transform="scale(1.065,1)">0</text>
<text x="109.62" y="172" fill="#262626" transform="scale(0.890,1)">-</text>
<text x="95.41" y="172" fill="#262626" transform="scale(1.065,1)">2</text>
<text x="109.62" y="210" fill="#262626" transform="scale(0.890,1)">-</text>
<text x="95.41" y="210" fill="#262626" transform="scale(1.065,1)">4</text>
<text x="109.62" y="248" fill="#262626" transform="scale(0.890,1)">-</text>
<text x="95.41" y="248" fill="#262626" transform="scale(1.065,1)">6</text>
<text x="95.41" y="360" fill="#262626" transform="scale(1.065,1)">2</text>
<text x="95.41" y="391" fill="#262626" transform="scale(1.065,1)">1</text>
<text x="95.41" y="421" fill="#262626" transform="scale(1.065,1)">0</text>
<text x="109.62" y="451" fill="#262626" transform="scale(0.890,1)">-</text>
<text x="95.41" y="451" fill="#262626" transform="scale(1.065,1)">1</text>
<text x="109.62" y="481" fill="#262626" transform="scale(0.890,1)">-</text>
<text x="95.41" y="481" fill="#262626" transform="scale(1.065,1)">2</text>
<text x="109.62" y="511" fill="#262626" transform="scale(0.890,1)">-</text>
<text x="95.41" y="511" fill="#262626" transform="scale(1.065,1)">3</text>
<text x="103.01" y="533" fill="#262626" transform="scale(1.065,1)">0</text>
<text x="234.46" y="533" fill="#262626" transform="scale(1.065,1)">2</text>
<text x="365.90" y="533" fill="#262626" transform="scale(1.065,1)">4</text>
<text x="497.34" y="533" fill="#262626" transform="scale(1.065,1)">6</text>
<text x="628.78" y="533" fill="#262626" transform="scale(1.065,1)">8</text>
<text x="757.31" y="533" fill="#262626" transform="scale(1.065,1)">1</text>
<text x="764.82" y="533" fill="#262626" transform="scale(1.065,1)">0</text>
<text x="888.76" y="533" fill="#262626" transform="scale(1.065,1)">1</text>
<text x="896.27" y="533" fill="#262626" transform="scale(1.065,1)">2</text>
<text x="1020.20" y="533" fill="#262626" transform="scale(1.065,1)">1</text>
<text x="1027.71" y="533" fill="#262626" transform="scale(1.065,1)">4</text>
<text x="1151.64" y="533" fill="#262626" transform="scale(1.065,1)">1</text>
<text x="1159.15" y="533" fill="#262626" transform="scale(1.065,1)">6</text>
<text x="51.63 60.59 70.14" y="178" fill="#262626" font-size="13.9" transform="rotate(-90 87.2 173) scale(0.950,1)">BPM</text>
<text x="69.25" y="178" fill="#262626" font-size="13.9" transform="rotate(-90 87.2 173) scale(1.117,1)">x</text>
<text x="71.09" y="178" fill="#262626" font-size="13.9" transform="rotate(-90 87.2 173) scale(1.256,1)">[</text>
<text x="86.68" y="178" fill="#262626" font-size="13.9" transform="rotate(-90 87.2 173) scale(1.089,1)">m</text>
<text x="98.61" y="178" fill="#262626" font-size="13.9" transform="rotate(-90 87.2 173) scale(1.089,1)">m</text>
<text x="95.77" y="178" fill="#262626" font-size="13.9" transform="rotate(-90 87.2 173) scale(1.256,1)">]</text>
<text x="52.15 60.94 70.40 82.53 89.33" y="431" fill="#262626" font-size="13.9" transform="rotate(-90 87.2 425.8) scale(0.950,1)">BPMz </text>
<text x="70.69" y="431" fill="#262626" font-size="13.9" transform="rotate(-90 87.2 425.8) scale(1.256,1)">[</text>
<text x="86.22" y="431" fill="#262626" font-size="13.9" transform="rotate(-90 87.2 425.8) scale(1.089,1)">m</text>
<text x="98.15" y="431" fill="#262626" font-size="13.9" transform="rotate(-90 87.2 425.8) scale(1.089,1)">m</text>
<text x="95.37" y="431" fill="#262626" font-size="13.9" transform="rotate(-90 87.2 425.8) scale(1.256,1)">]</text>
<text x="1573.59" y="59" transform="scale(0.890,1)">-</text>
<text x="1292.50" y="59" transform="scale(1.087,1)">2</text>
<text x="1298.79" y="59" transform="scale(1.088,1)">.</text>
<text x="1303.77" y="59" transform="scale(1.087,1)">4</text>
<text x="1311.28" y="59" transform="scale(1.087,1)">3</text>
<text x="1318.79" y="59" transform="scale(1.087,1)">8</text>
<text x="1326.30" y="59" transform="scale(1.087,1)">3</text>
<text x="1333.82" y="59" transform="scale(1.087,1)">0</text>
<text x="1341.33" y="59" transform="scale(1.087,1)">6</text>
<text x="1647.22" y="59" transform="scale(0.890,1)">e</text>
<text x="1138.61" y="59" transform="scale(1.294,1)">+</text>
<text x="1364.80" y="59" transform="scale(1.087,1)">0</text>
<text x="1372.31" y="59" transform="scale(1.087,1)">0</text>
<text x="1689.34 1701.14 1709.30" y="59" transform="scale(0.890,1)">Mea</text>
<text x="1406.11" y="59" transform="scale(1.087,1)">n</text>
<text x="1106.74" y="74" transform="scale(1.266,1)">+</text>
<text x="1326.86" y="74" transform="scale(1.063,1)">2</text>
<text x="1333.11" y="74" transform="scale(1.064,1)">.</text>
<text x="1338.13" y="74" transform="scale(1.063,1)">9</text>
<text x="1345.64" y="74" transform="scale(1.063,1)">4</text>
<text x="1353.15" y="74" transform="scale(1.063,1)">9</text>
<text x="1360.66" y="74" transform="scale(1.063,1)">7</text>
<text x="1368.17" y="74" transform="scale(1.063,1)">0</text>
<text x="1375.68" y="74" transform="scale(1.063,1)">5</text>
<text x="1652.74" y="74" transform="scale(0.890,1)">e</text>
<text x="1167.47" y="74" transform="scale(1.266,1)">+</text>
<text x="1399.15" y="74" transform="scale(1.063,1)">0</text>
<text x="1406.66" y="74" transform="scale(1.063,1)">0</text>
<text x="1693.15 1703.00 1714.55" y="74" transform="scale(0.890,1)">RMS</text>
<text x="1573.60" y="299" transform="scale(0.890,1)">-</text>
<text x="1290.30" y="299" transform="scale(1.089,1)">4</text>
<text x="1296.58" y="299" transform="scale(1.090,1)">.</text>
<text x="1301.56" y="299" transform="scale(1.089,1)">7</text>
<text x="1309.07" y="299" transform="scale(1.089,1)">4</text>
<text x="1316.58" y="299" transform="scale(1.089,1)">6</text>
<text x="1324.10" y="299" transform="scale(1.089,1)">7</text>
<text x="1331.61" y="299" transform="scale(1.089,1)">7</text>
<text x="1339.12" y="299" transform="scale(1.089,1)">7</text>
<text x="1647.16 1655.32" y="299" transform="scale(0.890,1)">e-</text>
<text x="1356.96" y="299" transform="scale(1.089,1)">0</text>
<text x="1364.47" y="299" transform="scale(1.089,1)">1</text>
<text x="1682.67 1694.47 1702.64" y="299" transform="scale(0.890,1)">Mea</text>
<text x="1398.27" y="299" transform="scale(1.089,1)">n</text>
<text x="1106.74" y="314" transform="scale(1.266,1)">+</text>
<text x="1326.86" y="314" transform="scale(1.063,1)">1</text>
<text x="1333.11" y="314" transform="scale(1.064,1)">.</text>
<text x="1338.13" y="314" transform="scale(1.063,1)">6</text>
<text x="1345.64" y="314" transform="scale(1.063,1)">7</text>
<text x="1353.15" y="314" transform="scale(1.063,1)">2</text>
<text x="1360.66" y="314" transform="scale(1.063,1)">0</text>
<text x="1368.17" y="314" transform="scale(1.063,1)">8</text>
<text x="1375.68" y="314" transform="scale(1.063,1)">0</text>
<text x="1652.74" y="314" transform="scale(0.890,1)">e</text>
<text x="1167.47" y="314" transform="scale(1.266,1)">+</text>
<text x="1399.15" y="314" transform="scale(1.063,1)">0</text>
<text x="1406.66" y="314" transform="scale(1.063,1)">0</text>
<text x="1693.15 1703.00 1714.55" y="314" transform="scale(0.890,1)">RMS</text>
<text x="1565.69 1574.28 1583.39" y="98" fill="#fff" transform="scale(0.890,1)">BPM</text>
<text x="1368.56" y="98" fill="#fff" transform="scale(1.037,1)">x</text>
<text x="1338.57" y="98" fill="#fff" transform="scale(1.065,1)">0</text>
<text x="1346.08" y="98" fill="#fff" transform="scale(1.065,1)">0</text>
<text x="1353.59" y="98" fill="#fff" transform="scale(1.065,1)">1</text>
<text x="1143.39" y="98" fill="#fff" transform="scale(1.268,1)">=</text>
<text x="1151.28" y="98" fill="#fff" transform="scale(1.268,1)">+</text>
<text x="1379.88" y="98" fill="#fff" transform="scale(1.065,1)">1</text>
<text x="1386.09" y="98" fill="#fff" transform="scale(1.066,1)">.</text>
<text x="1391.15" y="98" fill="#fff" transform="scale(1.065,1)">9</text>
<text x="1398.66" y="98" fill="#fff" transform="scale(1.065,1)">6</text>
<text x="1406.17" y="98" fill="#fff" transform="scale(1.065,1)">6</text>
<text x="1413.68" y="98" fill="#fff" transform="scale(1.065,1)">9</text>
<text x="1700.96" y="98" fill="#fff" transform="scale(0.890,1)">e</text>
<text x="1199.39" y="98" fill="#fff" transform="scale(1.268,1)">+</text>
<text x="1437.15" y="98" fill="#fff" transform="scale(1.065,1)">0</text>
<text x="1444.66" y="98" fill="#fff" transform="scale(1.065,1)">0</text>
<text x="1565.69 1574.28 1583.39" y="112" transform="scale(0.890,1)">BPM</text>
<text x="1368.56" y="112" transform="scale(1.037,1)">x</text>
<text x="1338.57" y="112" transform="scale(1.065,1)">0</text>
<text x="1346.08" y="112" transform="scale(1.065,1)">0</text>
<text x="1353.59" y="112" transform="scale(1.065,1)">2</text>
<text x="1143.39" y="112" transform="scale(1.268,1)">=</text>
<text x="1640.07" y="112" transform="scale(0.890,1)">-</text>
<text x="1374.25" y="112" transform="scale(1.065,1)">6</text>
<text x="1380.46" y="112" transform="scale(1.066,1)">.</text>
<text x="1385.51" y="112" transform="scale(1.065,1)">9</text>
<text x="1393.02" y="112" transform="scale(1.065,1)">3</text>
<text x="1400.53" y="112" transform="scale(1.065,1)">9</text>
<text x="1408.05" y="112" transform="scale(1.065,1)">2</text>
<text x="1694.22" y="112" transform="scale(0.890,1)">e</text>
<text x="1194.65" y="112" transform="scale(1.268,1)">+</text>
<text x="1431.52" y="112" transform="scale(1.065,1)">0</text>
<text x="1439.03" y="112" transform="scale(1.065,1)">0</text>
<text x="1565.69 1574.28 1583.39" y="126" transform="scale(0.890,1)">BPM</text>
<text x="1368.56" y="126" transform="scale(1.037,1)">x</text>
<text x="1338.57" y="126" transform="scale(1.065,1)">0</text>
<text x="1346.08" y="126" transform="scale(1.065,1)">0</text>
<text x="1353.59" y="126" transform="scale(1.065,1)">3</text>
<text x="1143.39" y="126" transform="scale(1.268,1)">=</text>
<text x="1640.07" y="126" transform="scale(0.890,1)">-</text>
<text x="1374.25" y="126" transform="scale(1.065,1)">2</text>
<text x="1380.46" y="126" transform="scale(1.066,1)">.</text>
<text x="1385.51" y="126" transform="scale(1.065,1)">9</text>
<text x="1393.02" y="126" transform="scale(1.065,1)">0</text>
<text x="1400.53" y="126" transform="scale(1.065,1)">6</text>
<text x="1408.05" y="126" transform="scale(1.065,1)">1</text>
<text x="1694.22" y="126" transform="scale(0.890,1)">e</text>
<text x="1194.65" y="126" transform="scale(1.268,1)">+</text>
<text x="1431.52" y="126" transform="scale(1.065,1)">0</text>
<text x="1439.03" y="126" transform="scale(1.065,1)">0</text>
<text x="1565.69 1574.28 1583.39" y="140" transform="scale(0.890,1)">BPM</text>
<text x="1368.56" y="140" transform="scale(1.037,1)">x</text>
<text x="1338.57" y="140" transform="scale(1.065,1)">0</text>
<text x="1346.08" y="140" transform="scale(1.065,1)">0</text>
<text x="1353.59" y="140" transform="scale(1.065,1)">4</text>
<text x="1143.39" y="140" transform="scale(1.268,1)">=</text>
<text x="1640.07" y="140" transform="scale(0.890,1)">-</text>
<text x="1374.25" y="140" transform="scale(1.065,1)">2</text>
<text x="1380.46" y="140" transform="scale(1.066,1)">.</text>
<text x="1385.51" y="140" transform="scale(1.065,1)">0</text>
<text x="1393.02" y="140" transform="scale(1.065,1)">4</text>
<text x="1400.53" y="140" transform="scale(1.065,1)">9</text>
<text x="1408.05" y="140" transform="scale(1.065,1)">7</text>
<text x="1694.22" y="140" transform="scale(0.890,1)">e</text>
<text x="1194.65" y="140" transform="scale(1.268,1)">+</text>
<text x="1431.52" y="140" transform="scale(1.065,1)">0</text>
<text x="1439.03" y="140" transform="scale(1.065,1)">0</text>
<text x="1565.69 1574.28 1583.39" y="154" transform="scale(0.890,1)">BPM</text>
<text x="1368.56" y="154" transform="scale(1.037,1)">x</text>
<text x="1338.57" y="154" transform="scale(1.065,1)">0</text>
<text x="1346.08" y="154" transform="scale(1.065,1)">0</text>
<text x="1353.59" y="154" transform="scale(1.065,1)">5</text>
<text x="1143.39" y="154" transform="scale(1.268,1)">=</text>
<text x="1640.07" y="154" transform="scale(0.890,1)">-</text>
<text x="1374.25" y="154" transform="scale(1.065,1)">5</text>
<text x="1380.46" y="154" transform="scale(1.066,1)">.</text>
<text x="1385.51" y="154" transform="scale(1.065,1)">5</text>
<text x="1393.02" y="154" transform="scale(1.065,1)">3</text>
<text x="1400.53" y="154" transform="scale(1.065,1)">0</text>
<text x="1408.05" y="154" transform="scale(1.065,1)">4</text>
<text x="1694.22" y="154" transform="scale(0.890,1)">e</text>
<text x="1194.65" y="154" transform="scale(1.268,1)">+</text>
<text x="1431.52" y="154" transform="scale(1.065,1)">0</text>
<text x="1439.03" y="154" transform="scale(1.065,1)">0</text>
<text x="1565.69 1574.28 1583.39" y="168" transform="scale(0.890,1)">BPM</text>
<text x="1368.56" y="168" transform="scale(1.037,1)">x</text>
<text x="1338.57" y="168" transform="scale(1.065,1)">0</text>
<text x="1346.08" y="168" transform="scale(1.065,1)">0</text>
<text x="1353.59" y="168" transform="scale(1.065,1)">6</text>
<text x="1143.39" y="168" transform="scale(1.268,1)">=</text>
<text x="1151.28" y="168" transform="scale(1.268,1)">+</text>
<text x="1379.88" y="168" transform="scale(1.065,1)">8</text>
<text x="1386.09" y="168" transform="scale(1.066,1)">.</text>
<text x="1391.15" y="168" transform="scale(1.065,1)">6</text>
<text x="1398.66" y="168" transform="scale(1.065,1)">7</text>
<text x="1406.17" y="168" transform="scale(1.065,1)">4</text>
<text x="1413.68" y="168" transform="scale(1.065,1)">0</text>
<text x="1700.64 1708.81" y="168" transform="scale(0.890,1)">e-</text>
<text x="1431.52" y="168" transform="scale(1.065,1)">0</text>
<text x="1439.03" y="168" transform="scale(1.065,1)">1</text>
<text x="1565.69 1574.28 1583.39" y="182" transform="scale(0.890,1)">BPM</text>
<text x="1368.56" y="182" transform="scale(1.037,1)">x</text>
<text x="1338.57" y="182" transform="scale(1.065,1)">0</text>
<text x="1346.08" y="182" transform="scale(1.065,1)">0</text>
<text x="1353.59" y="182" transform="scale(1.065,1)">7</text>
<text x="1143.39" y="182" transform="scale(1.268,1)">=</text>
<text x="1151.28" y="182" transform="scale(1.268,1)">+</text>
<text x="1379.88" y="182" transform="scale(1.065,1)">3</text>
<text x="1386.09" y="182" transform="scale(1.066,1)">.</text>
<text x="1391.15" y="182" transform="scale(1.065,1)">5</text>
<text x="1398.66" y="182" transform="scale(1.065,1)">9</text>
<text x="1406.17" y="182" transform="scale(1.065,1)">1</text>
<text x="1413.68" y="182" transform="scale(1.065,1)">2</text>
<text x="1700.64 1708.81" y="182" transform="scale(0.890,1)">e-</text>
<text x="1431.52" y="182" transform="scale(1.065,1)">0</text>
<text x="1439.03" y="182" transform="scale(1.065,1)">1</text>
<text x="1565.69 1574.28 1583.39" y="196" transform="scale(0.890,1)">BPM</text>
<text x="1368.56" y="196" transform="scale(1.037,1)">x</text>
<text x="1338.57" y="196" transform="scale(1.065,1)">0</text>
<text x="1346.08" y="196" transform="scale(1.065,1)">0</text>
<text x="1353.59" y="196" transform="scale(1.065,1)">8</text>
<text x="1143.39" y="196" transform="scale(1.268,1)">=</text>
<text x="1640.07" y="196" transform="scale(0.890,1)">-</text>
<text x="1374.25" y="196" transform="scale(1.065,1)">5</text>
<text x="1380.46" y="196" transform="scale(1.066,1)">.</text>
<text x="1385.51" y="196" transform="scale(1.065,1)">4</text>
<text x="1393.02" y="196" transform="scale(1.065,1)">9</text>
<text x="1400.53" y="196" transform="scale(1.065,1)">1</text>
<text x="1408.05" y="196" transform="scale(1.065,1)">7</text>
<text x="1694.22" y="196" transform="scale(0.890,1)">e</text>
<text x="1194.65" y="196" transform="scale(1.268,1)">+</text>
<text x="1431.52" y="196" transform="scale(1.065,1)">0</text>
<text x="1439.03" y="196" transform="scale(1.065,1)">0</text>
<text x="1565.69 1574.28 1583.39" y="210" transform="scale(0.890,1)">BPM</text>
<text x="1368.56" y="210" transform="scale(1.037,1)">x</text>
<text x="1338.57" y="210" transform="scale(1.065,1)">0</text>
<text x="1346.08" y="210" transform="scale(1.065,1)">0</text>
<text x="1353.59" y="210" transform="scale(1.065,1)">9</text>
<text x="1143.39" y="210" transform="scale(1.268,1)">=</text>
<text x="1640.07" y="210" transform="scale(0.890,1)">-</text>
<text x="1374.25" y="210" transform="scale(1.065,1)">1</text>
<text x="1380.46" y="210" transform="scale(1.066,1)">.</text>
<text x="1385.51" y="210" transform="scale(1.065,1)">4</text>
<text x="1393.02" y="210" transform="scale(1.065,1)">1</text>
<text x="1400.53" y="210" transform="scale(1.065,1)">4</text>
<text x="1408.05" y="210" transform="scale(1.065,1)">4</text>
<text x="1694.22" y="210" transform="scale(0.890,1)">e</text>
<text x="1194.65" y="210" transform="scale(1.268,1)">+</text>
<text x="1431.52" y="210" transform="scale(1.065,1)">0</text>
<text x="1439.03" y="210" transform="scale(1.065,1)">0</text>
<text x="1565.69 1574.28 1583.39" y="224" transform="scale(0.890,1)">BPM</text>
<text x="1368.56" y="224" transform="scale(1.037,1)">x</text>
<text x="1338.57" y="224" transform="scale(1.065,1)">0</text>
<text x="1346.08" y="224" transform="scale(1.065,1)">1</text>
<text x="1353.59" y="224" transform="scale(1.065,1)">0</text>
<text x="1143.39" y="224" transform="scale(1.268,1)">=</text>
<text x="1640.07" y="224" transform="scale(0.890,1)">-</text>
<text x="1374.25" y="224" transform="scale(1.065,1)">2</text>
<text x="1380.46" y="224" transform="scale(1.066,1)">.</text>
<text x="1385.51" y="224" transform="scale(1.065,1)">9</text>
<text x="1393.02" y="224" transform="scale(1.065,1)">2</text>
<text x="1400.53" y="224" transform="scale(1.065,1)">8</text>
<text x="1408.05" y="224" transform="scale(1.065,1)">2</text>
<text x="1694.22" y="224" transform="scale(0.890,1)">e</text>
<text x="1194.65" y="224" transform="scale(1.268,1)">+</text>
<text x="1431.52" y="224" transform="scale(1.065,1)">0</text>
<text x="1439.03" y="224" transform="scale(1.065,1)">0</text>
<text x="1565.69 1574.28 1583.39" y="238" transform="scale(0.890,1)">BPM</text>
<text x="1368.56" y="238" transform="scale(1.037,1)">x</text>
<text x="1338.57" y="238" transform="scale(1.065,1)">0</text>
<text x="1346.08" y="238" transform="scale(1.065,1)">1</text>
<text x="1353.59" y="238" transform="scale(1.065,1)">1</text>
<text x="1143.39" y="238" transform="scale(1.268,1)">=</text>
<text x="1640.07" y="238" transform="scale(0.890,1)">-</text>
<text x="1374.25" y="238" transform="scale(1.065,1)">6</text>
<text x="1380.46" y="238" transform="scale(1.066,1)">.</text>
<text x="1385.51" y="238" transform="scale(1.065,1)">7</text>
<text x="1393.02" y="238" transform="scale(1.065,1)">7</text>
<text x="1400.53" y="238" transform="scale(1.065,1)">3</text>
<text x="1408.05" y="238" transform="scale(1.065,1)">5</text>
<text x="1694.22" y="238" transform="scale(0.890,1)">e</text>
<text x="1194.65" y="238" transform="scale(1.268,1)">+</text>
<text x="1431.52" y="238" transform="scale(1.065,1)">0</text>
<text x="1439.03" y="238" transform="scale(1.065,1)">0</text>
<text x="1565.69 1574.28 1583.39" y="252" transform="scale(0.890,1)">BPM</text>
<text x="1368.56" y="252" transform="scale(1.037,1)">x</text>
<text x="1338.57" y="252" transform="scale(1.065,1)">0</text>
<text x="1346.08" y="252" transform="scale(1.065,1)">1</text>
<text x="1353.59" y="252" transform="scale(1.065,1)">2</text>
<text x="1143.39" y="252" transform="scale(1.268,1)">=</text>
<text x="1151.28" y="252" transform="scale(1.268,1)">+</text>
<text x="1379.88" y="252" transform="scale(1.065,1)">1</text>
<text x="1386.09" y="252" transform="scale(1.066,1)">.</text>
<text x="1391.15" y="252" transform="scale(1.065,1)">5</text>
<text x="1398.66" y="252" transform="scale(1.065,1)">8</text>
<text x="1406.17" y="252" transform="scale(1.065,1)">0</text>
<text x="1413.68" y="252" transform="scale(1.065,1)">1</text>
<text x="1700.96" y="252" transform="scale(0.890,1)">e</text>
<text x="1199.39" y="252" transform="scale(1.268,1)">+</text>
<text x="1437.15" y="252" transform="scale(1.065,1)">0</text>
<text x="1444.66" y="252" transform="scale(1.065,1)">0</text>
<text x="1565.69 1574.09 1583.11 1594.59" y="340" fill="#fff" transform="scale(0.890,1)">BPMz</text>
<text x="1337.63" y="340" fill="#fff" transform="scale(1.065,1)">0</text>
<text x="1345.14" y="340" fill="#fff" transform="scale(1.065,1)">0</text>
<text x="1352.65" y="340" fill="#fff" transform="scale(1.065,1)">1</text>
<text x="1142.60" y="340" fill="#fff" transform="scale(1.268,1)">=</text>
<text x="1150.49" y="340" fill="#fff" transform="scale(1.268,1)">+</text>
<text x="1378.94" y="340" fill="#fff" transform="scale(1.065,1)">4</text>
<text x="1385.15" y="340" fill="#fff" transform="scale(1.066,1)">.</text>
<text x="1390.21" y="340" fill="#fff" transform="scale(1.065,1)">9</text>
<text x="1397.72" y="340" fill="#fff" transform="scale(1.065,1)">7</text>
<text x="1405.23" y="340" fill="#fff" transform="scale(1.065,1)">2</text>
<text x="1412.74" y="340" fill="#fff" transform="scale(1.065,1)">4</text>
<text x="1699.52 1707.69" y="340" fill="#fff" transform="scale(0.890,1)">e-</text>
<text x="1430.58" y="340" fill="#fff" transform="scale(1.065,1)">0</text>
<text x="1438.09" y="340" fill="#fff" transform="scale(1.065,1)">2</text>
<text x="1565.69 1574.09 1583.11 1594.59" y="354" transform="scale(0.890,1)">BPMz</text>
<text x="1337.63" y="354" transform="scale(1.065,1)">0</text>
<text x="1345.14" y="354" transform="scale(1.065,1)">0</text>
<text x="1352.65" y="354" transform="scale(1.065,1)">2</text>
<text x="1142.60" y="354" transform="scale(1.268,1)">=</text>
<text x="1150.49" y="354" transform="scale(1.268,1)">+</text>
<text x="1378.94" y="354" transform="scale(1.065,1)">1</text>
<text x="1385.15" y="354" transform="scale(1.066,1)">.</text>
<text x="1390.21" y="354" transform="scale(1.065,1)">0</text>
<text x="1397.72" y="354" transform="scale(1.065,1)">0</text>
<text x="1405.23" y="354" transform="scale(1.065,1)">5</text>
<text x="1412.74" y="354" transform="scale(1.065,1)">5</text>
<text x="1699.84" y="354" transform="scale(0.890,1)">e</text>
<text x="1198.60" y="354" transform="scale(1.268,1)">+</text>
<text x="1436.21" y="354" transform="scale(1.065,1)">0</text>
<text x="1443.72" y="354" transform="scale(1.065,1)">0</text>
<text x="1565.69 1574.09 1583.11 1594.59" y="368" transform="scale(0.890,1)">BPMz</text>
<text x="1337.63" y="368" transform="scale(1.065,1)">0</text>
<text x="1345.14" y="368" transform="scale(1.065,1)">0</text>
<text x="1352.65" y="368" transform="scale(1.065,1)">3</text>
<text x="1142.60" y="368" transform="scale(1.268,1)">=</text>
<text x="1150.49" y="368" transform="scale(1.268,1)">+</text>
<text x="1378.94" y="368" transform="scale(1.065,1)">1</text>
<text x="1385.15" y="368" transform="scale(1.066,1)">.</text>
<text x="1390.21" y="368" transform="scale(1.065,1)">9</text>
<text x="1397.72" y="368" transform="scale(1.065,1)">8</text>
<text x="1405.23" y="368" transform="scale(1.065,1)">9</text>
<text x="1412.74" y="368" transform="scale(1.065,1)">0</text>
<text x="1699.52 1707.69" y="368" transform="scale(0.890,1)">e-</text>
<text x="1430.58" y="368" transform="scale(1.065,1)">0</text>
<text x="1438.09" y="368" transform="scale(1.065,1)">1</text>
<text x="1565.69 1574.09 1583.11 1594.59" y="382" transform="scale(0.890,1)">BPMz</text>
<text x="1337.63" y="382" transform="scale(1.065,1)">0</text>
<text x="1345.14" y="382" transform="scale(1.065,1)">0</text>
<text x="1352.65" y="382" transform="scale(1.065,1)">4</text>
<text x="1142.60" y="382" transform="scale(1.268,1)">=</text>
<text x="1638.94" y="382" transform="scale(0.890,1)">-</text>
<text x="1373.31" y="382" transform="scale(1.065,1)">1</text>
<text x="1379.52" y="382" transform="scale(1.066,1)">.</text>
<text x="1384.57" y="382" transform="scale(1.065,1)">9</text>
<text x="1392.08" y="382" transform="scale(1.065,1)">8</text>
<text x="1399.60" y="382" transform="scale(1.065,1)">9</text>
<text x="1407.11" y="382" transform="scale(1.065,1)">0</text>
<text x="1693.10" y="382" transform="scale(0.890,1)">e</text>
<text x="1193.86" y="382" transform="scale(1.268,1)">+</text>
<text x="1430.58" y="382" transform="scale(1.065,1)">0</text>
<text x="1438.09" y="382" transform="scale(1.065,1)">0</text>
<text x="1565.69 1574.09 1583.11 1594.59" y="396" transform="scale(0.890,1)">BPMz</text>
<text x="1337.63" y="396" transform="scale(1.065,1)">0</text>
<text x="1345.14" y="396" transform="scale(1.065,1)">0</text>
<text x="1352.65" y="396" transform="scale(1.065,1)">5</text>
<text x="1142.60" y="396" transform="scale(1.268,1)">=</text>
<text x="1638.94" y="396" transform="scale(0.890,1)">-</text>
<text x="1373.31" y="396" transform="scale(1.065,1)">2</text>
<text x="1379.52" y="396" transform="scale(1.066,1)">.</text>
<text x="1384.57" y="396" transform="scale(1.065,1)">6</text>
<text x="1392.08" y="396" transform="scale(1.065,1)">0</text>
<text x="1399.60" y="396" transform="scale(1.065,1)">7</text>
<text x="1407.11" y="396" transform="scale(1.065,1)">7</text>
<text x="1693.10" y="396" transform="scale(0.890,1)">e</text>
<text x="1193.86" y="396" transform="scale(1.268,1)">+</text>
<text x="1430.58" y="396" transform="scale(1.065,1)">0</text>
<text x="1438.09" y="396" transform="scale(1.065,1)">0</text>
<text x="1565.69 1574.09 1583.11 1594.59" y="410" transform="scale(0.890,1)">BPMz</text>
<text x="1337.63" y="410" transform="scale(1.065,1)">0</text>
<text x="1345.14" y="410" transform="scale(1.065,1)">0</text>
<text x="1352.65" y="410" transform="scale(1.065,1)">6</text>
<text x="1142.60" y="410" transform="scale(1.268,1)">=</text>
<text x="1638.94" y="410" transform="scale(0.890,1)">-</text>
<text x="1373.31" y="410" transform="scale(1.065,1)">1</text>
<text x="1379.52" y="410" transform="scale(1.066,1)">.</text>
<text x="1384.57" y="410" transform="scale(1.065,1)">0</text>
<text x="1392.08" y="410" transform="scale(1.065,1)">4</text>
<text x="1399.60" y="410" transform="scale(1.065,1)">9</text>
<text x="1407.11" y="410" transform="scale(1.065,1)">7</text>
<text x="1693.10" y="410" transform="scale(0.890,1)">e</text>
<text x="1193.86" y="410" transform="scale(1.268,1)">+</text>
<text x="1430.58" y="410" transform="scale(1.065,1)">0</text>
<text x="1438.09" y="410" transform="scale(1.065,1)">0</text>
<text x="1565.69 1574.09 1583.11 1594.59" y="424" transform="scale(0.890,1)">BPMz</text>
<text x="1337.63" y="424" transform="scale(1.065,1)">0</text>
<text x="1345.14" y="424" transform="scale(1.065,1)">0</text>
<text x="1352.65" y="424" transform="scale(1.065,1)">7</text>
<text x="1142.60" y="424" transform="scale(1.268,1)">=</text>
<text x="1150.49" y="424" transform="scale(1.268,1)">+</text>
<text x="1378.94" y="424" transform="scale(1.065,1)">3</text>
<text x="1385.15" y="424" transform="scale(1.066,1)">.</text>
<text x="1390.21" y="424" transform="scale(1.065,1)">9</text>
<text x="1397.72" y="424" transform="scale(1.065,1)">2</text>
<text x="1405.23" y="424" transform="scale(1.065,1)">2</text>
<text x="1412.74" y="424" transform="scale(1.065,1)">7</text>
<text x="1699.52 1707.69" y="424" transform="scale(0.890,1)">e-</text>
<text x="1430.58" y="424" transform="scale(1.065,1)">0</text>
<text x="1438.09" y="424" transform="scale(1.065,1)">1</text>
<text x="1565.69 1574.09 1583.11 1594.59" y="438" transform="scale(0.890,1)">BPMz</text>
<text x="1337.63" y="438" transform="scale(1.065,1)">0</text>
<text x="1345.14" y="438" transform="scale(1.065,1)">0</text>
<text x="1352.65" y="438" transform="scale(1.065,1)">8</text>
<text x="1142.60" y="438" transform="scale(1.268,1)">=</text>
<text x="1150.49" y="438" transform="scale(1.268,1)">+</text>
<text x="1378.94" y="438" transform="scale(1.065,1)">2</text>
<text x="1385.15" y="438" transform="scale(1.066,1)">.</text>
<text x="1390.21" y="438" transform="scale(1.065,1)">1</text>
<text x="1397.72" y="438" transform="scale(1.065,1)">3</text>
<text x="1405.23" y="438" transform="scale(1.065,1)">8</text>
<text x="1412.74" y="438" transform="scale(1.065,1)">1</text>
<text x="1699.84" y="438" transform="scale(0.890,1)">e</text>
<text x="1198.60" y="438" transform="scale(1.268,1)">+</text>
<text x="1436.21" y="438" transform="scale(1.065,1)">0</text>
<text x="1443.72" y="438" transform="scale(1.065,1)">0</text>
<text x="1565.69 1574.09 1583.11 1594.59" y="452" transform="scale(0.890,1)">BPMz</text>
<text x="1337.63" y="452" transform="scale(1.065,1)">0</text>
<text x="1345.14" y="452" transform="scale(1.065,1)">0</text>
<text x="1352.65" y="452" transform="scale(1.065,1)">9</text>
<text x="1142.60" y="452" transform="scale(1.268,1)">=</text>
<text x="1150.49" y="452" transform="scale(1.268,1)">+</text>
<text x="1378.94" y="452" transform="scale(1.065,1)">2</text>
<text x="1385.15" y="452" transform="scale(1.066,1)">.</text>
<text x="1390.21" y="452" transform="scale(1.065,1)">4</text>
<text x="1397.72" y="452" transform="scale(1.065,1)">0</text>
<text x="1405.23" y="452" transform="scale(1.065,1)">3</text>
<text x="1412.74" y="452" transform="scale(1.065,1)">3</text>
<text x="1699.84" y="452" transform="scale(0.890,1)">e</text>
<text x="1198.60" y="452" transform="scale(1.268,1)">+</text>
<text x="1436.21" y="452" transform="scale(1.065,1)">0</text>
<text x="1443.72" y="452" transform="scale(1.065,1)">0</text>
<text x="1565.69 1574.09 1583.11 1594.59" y="466" transform="scale(0.890,1)">BPMz</text>
<text x="1337.63" y="466" transform="scale(1.065,1)">0</text>
<text x="1345.14" y="466" transform="scale(1.065,1)">1</text>
<text x="1352.65" y="466" transform="scale(1.065,1)">0</text>
<text x="1142.60" y="466" transform="scale(1.268,1)">=</text>
<text x="1638.94" y="466" transform="scale(0.890,1)">-</text>
<text x="1373.31" y="466" transform="scale(1.065,1)">2</text>
<text x="1379.52" y="466" transform="scale(1.066,1)">.</text>
<text x="1384.57" y="466" transform="scale(1.065,1)">3</text>
<text x="1392.08" y="466" transform="scale(1.065,1)">2</text>
<text x="1399.60" y="466" transform="scale(1.065,1)">0</text>
<text x="1407.11" y="466" transform="scale(1.065,1)">4</text>
<text x="1693.10" y="466" transform="scale(0.890,1)">e</text>
<text x="1193.86" y="466" transform="scale(1.268,1)">+</text>
<text x="1430.58" y="466" transform="scale(1.065,1)">0</text>
<text x="1438.09" y="466" transform="scale(1.065,1)">0</text>
<text x="1565.69 1574.09 1583.11 1594.59" y="480" transform="scale(0.890,1)">BPMz</text>
<text x="1337.63" y="480" transform="scale(1.065,1)">0</text>
<text x="1345.14" y="480" transform="scale(1.065,1)">1</text>
<text x="1352.65" y="480" transform="scale(1.065,1)">1</text>
<text x="1142.60" y="480" transform="scale(1.268,1)">=</text>
<text x="1638.94" y="480" transform="scale(0.890,1)">-</text>
<text x="1373.31" y="480" transform="scale(1.065,1)">3</text>
<text x="1379.52" y="480" transform="scale(1.066,1)">.</text>
<text x="1384.57" y="480" transform="scale(1.065,1)">1</text>
<text x="1392.08" y="480" transform="scale(1.065,1)">4</text>
<text x="1399.60" y="480" transform="scale(1.065,1)">9</text>
<text x="1407.11" y="480" transform="scale(1.065,1)">2</text>
<text x="1693.10" y="480" transform="scale(0.890,1)">e</text>
<text x="1193.86" y="480" transform="scale(1.268,1)">+</text>
<text x="1430.58" y="480" transform="scale(1.065,1)">0</text>
<text x="1438.09" y="480" transform="scale(1.065,1)">0</text>
<text x="1565.69 1574.09 1583.11 1594.59" y="494" transform="scale(0.890,1)">BPMz</text>
<text x="1337.63" y="494" transform="scale(1.065,1)">0</text>
<text x="1345.14" y="494" transform="scale(1.065,1)">1</text>
<text x="1352.65" y="494" transform="scale(1.065,1)">2</text>
<text x="1142.60" y="494" transform="scale(1.268,1)">=</text>
<text x="1638.94" y="494" transform="scale(0.890,1)">-</text>
<text x="1373.31" y="494" transform="scale(1.065,1)">7</text>
<text x="1379.52" y="494" transform="scale(1.066,1)">.</text>
<text x="1384.57" y="494" transform="scale(1.065,1)">6</text>
<text x="1392.08" y="494" transform="scale(1.065,1)">7</text>
<text x="1399.60" y="494" transform="scale(1.065,1)">9</text>
<text x="1407.11" y="494" transform="scale(1.065,1)">6</text>
<text x="1692.78 1700.95" y="494" transform="scale(0.890,1)">e-</text>
<text x="1424.94" y="494" transform="scale(1.065,1)">0</text>
<text x="1432.46" y="494" transform="scale(1.065,1)">1</text>
<text x="77.37" y="567" transform="scale(0.950,1)">T</text>
<text x="76.73" y="567" transform="scale(1.062,1)">r</text>
<text x="67.72" y="567" transform="scale(1.273,1)">i</text>
<text x="95.05 103.15 111.25" y="567" transform="scale(0.950,1)">gge</text>
<text x="106.41" y="567" transform="scale(1.062,1)">r</text>
<text x="70.04" y="600" transform="scale(0.950,1)">O</text>
<text x="72.46" y="600" transform="scale(1.056,1)">n</text>
<text x="79.98" y="600" transform="scale(1.056,1)">e</text>
<text x="100.87" y="600" transform="scale(0.950,1)">S</text>
<text x="98.75" y="600" transform="scale(1.056,1)">h</text>
<text x="106.26" y="600" transform="scale(1.056,1)">o</text>
<text x="90.90" y="600" transform="scale(1.321,1)">t</text>
<text x="74.24 84.34 92.38 100.43" y="641" transform="scale(0.950,1)">Runn</text>
<text x="80.96" y="641" transform="scale(1.264,1)">i</text>
<text x="112.19 120.27" y="641" transform="scale(0.950,1)">ng</text>
<text x="60.01" y="669" transform="scale(1.047,1)">3</text>
<text x="67.40" y="669" transform="scale(1.048,1)">:</text>
<text x="71.27" y="669" transform="scale(1.047,1)">4</text>
<text x="78.78" y="669" transform="scale(1.047,1)">8</text>
<text x="86.16" y="669" transform="scale(1.048,1)">:</text>
<text x="90.05" y="669" transform="scale(1.047,1)">0</text>
<text x="97.56" y="669" transform="scale(1.047,1)">8</text>
<text x="119.04 128.57" y="669" transform="scale(0.950,1)">PM</text>
<text x="295.41" y="562" font-size="10.4" transform="scale(1.056,1)">Z</text>
<text x="335.75 342.19" y="562" font-size="10.4" transform="scale(0.950,1)">oo</text>
<text x="299.01" y="562" font-size="10.4" transform="scale(1.106,1)">m</text>
<text x="397.66" y="562" font-size="10.4" transform="scale(0.950,1)">O</text>
<text x="293.03" y="562" font-size="10.4" transform="scale(1.316,1)">f</text>
<text x="296.01" y="562" font-size="10.4" transform="scale(1.316,1)">f</text>
<text x="413.89 419.74" y="562" font-size="10.4" transform="scale(0.950,1)">se</text>
<text x="307.18" y="562" font-size="10.4" transform="scale(1.316,1)">t</text>
<text x="243.54" y="582" transform="scale(0.950,1)">G</text>
<text x="223.52" y="582" transform="scale(1.080,1)">r</text>
<text x="259.73 267.85 275.96 283.89 288.20" y="582" transform="scale(0.950,1)">aph 1</text>
<text x="244.24 253.81" y="599" transform="scale(0.950,1)">Ve</text>
<text x="231.96" y="599" transform="scale(1.071,1)">r</text>
<text x="197.27" y="599" transform="scale(1.284,1)">t</text>
<text x="200.93" y="599" transform="scale(1.284,1)">i</text>
<text x="275.87 283.25" y="599" transform="scale(0.950,1)">ca</text>
<text x="215.18" y="599" transform="scale(1.284,1)">l</text>
<text x="274.00" y="601" transform="scale(1.185,1)">v</text>
<text x="324.65" y="601" transform="scale(1.185,1)">v</text>
<text x="464.83" y="591" transform="scale(0.950,1)">A</text>
<text x="428.33" y="591" transform="scale(1.051,1)">u</text>
<text x="348.33" y="591" transform="scale(1.315,1)">t</text>
<text x="440.54" y="591" transform="scale(1.051,1)">o</text>
<text x="499.20 508.77" y="591" transform="scale(0.950,1)">Sc</text>
<text x="465.89" y="591" transform="scale(1.051,1)">a</text>
<text x="378.18" y="591" transform="scale(1.316,1)">l</text>
<text x="477.15" y="591" transform="scale(1.051,1)">e</text>
<text x="244.60" y="627" transform="scale(0.950,1)">G</text>
<text x="224.45" y="627" transform="scale(1.080,1)">r</text>
<text x="260.78 268.90 277.02 284.94 289.26" y="627" transform="scale(0.950,1)">aph 2</text>
<text x="245.29 254.86" y="644" transform="scale(0.950,1)">Ve</text>
<text x="232.89" y="644" transform="scale(1.071,1)">r</text>
<text x="198.05" y="644" transform="scale(1.284,1)">t</text>
<text x="201.71" y="644" transform="scale(1.284,1)">i</text>
<text x="276.92 284.30" y="644" transform="scale(0.950,1)">ca</text>
<text x="215.96" y="644" transform="scale(1.284,1)">l</text>
<text x="274.42" y="643" transform="scale(1.185,1)">v</text>
<text x="324.65" y="643" transform="scale(1.185,1)">v</text>
<text x="464.83" y="634" transform="scale(0.950,1)">A</text>
<text x="428.33" y="634" transform="scale(1.051,1)">u</text>
<text x="348.33" y="634" transform="scale(1.315,1)">t</text>
<text x="440.54" y="634" transform="scale(1.051,1)">o</text>
<text x="499.20 508.77" y="634" transform="scale(0.950,1)">Sc</text>
<text x="465.89" y="634" transform="scale(1.051,1)">a</text>
<text x="378.18" y="634" transform="scale(1.316,1)">l</text>
<text x="477.15" y="634" transform="scale(1.051,1)">e</text>
<text x="247.08" y="669" font-size="10.2" transform="scale(0.920,1)">H</text>
<text x="229.82" y="669" font-size="10.2" transform="scale(1.020,1)">o</text>
<text x="211.65" y="669" font-size="10.2" transform="scale(1.135,1)">r</text>
<text x="191.37" y="669" font-size="10.2" transform="scale(1.276,1)">i</text>
<text x="268.79" y="669" font-size="10.2" transform="scale(0.920,1)">z</text>
<text x="247.37" y="669" font-size="10.2" transform="scale(1.020,1)">o</text>
<text x="253.21" y="669" font-size="10.2" transform="scale(1.020,1)">n</text>
<text x="197.34" y="669" font-size="10.2" transform="scale(1.339,1)">t</text>
<text x="262.96" y="669" font-size="10.2" transform="scale(1.020,1)">a</text>
<text x="214.73" y="669" font-size="10.2" transform="scale(1.276,1)">l</text>
<text x="463.97" y="670" transform="scale(0.950,1)">A</text>
<text x="428.19" y="670" transform="scale(1.050,1)">u</text>
<text x="348.21" y="670" transform="scale(1.313,1)">t</text>
<text x="440.39" y="670" transform="scale(1.050,1)">o</text>
<text x="498.29 507.86" y="670" transform="scale(0.950,1)">Sc</text>
<text x="465.74" y="670" transform="scale(1.050,1)">a</text>
<text x="378.06" y="670" transform="scale(1.314,1)">l</text>
<text x="477.01" y="670" transform="scale(1.050,1)">e</text>
<text x="608.32 616.76 621.75 629.68 636.86 644.03 648.08" y="567" fill="#0000ff" transform="scale(0.950,1)">Trace 1</text>
<text x="609.84" y="597" transform="scale(0.950,1)">A</text>
<text x="683.53" y="597" transform="scale(0.950,1)">B</text>
<text x="761.94" y="597" transform="scale(0.950,1)">A</text>
<text x="658.94" y="597" transform="scale(1.112,1)">-</text>
<text x="776.69" y="597" transform="scale(0.950,1)">B</text>
<text x="609.69" y="636" fill="#ff0000" transform="scale(0.950,1)">T</text>
<text x="553.41" y="636" fill="#ff0000" transform="scale(1.061,1)">r</text>
<text x="623.55 631.63 638.96 646.29 650.49" y="636" fill="#ff0000" transform="scale(0.950,1)">ace 2</text>
<text x="763.23" y="640" transform="scale(0.950,1)">O</text>
<text x="646.93" y="640" transform="scale(1.135,1)">f</text>
<text x="650.68" y="640" transform="scale(1.135,1)">f</text>
<text x="611.21" y="666" transform="scale(0.950,1)">A</text>
<text x="683.53" y="666" transform="scale(0.950,1)">B</text>
<text x="761.94" y="666" transform="scale(0.950,1)">A</text>
<text x="658.94" y="666" transform="scale(1.112,1)">-</text>
<text x="776.69" y="666" transform="scale(0.950,1)">B</text>
<text x="914.09" y="566" transform="scale(0.950,1)">C</text>
<text x="823.97" y="566" transform="scale(1.065,1)">h</text>
<text x="831.48" y="566" transform="scale(1.065,1)">a</text>
<text x="838.99" y="566" transform="scale(1.065,1)">n</text>
<text x="846.51" y="566" transform="scale(1.065,1)">n</text>
<text x="854.02" y="566" transform="scale(1.065,1)">e</text>
<text x="688.28" y="566" transform="scale(1.333,1)">l</text>
<text x="974.58" y="566" transform="scale(0.950,1)">A</text>
<text x="885.60" y="588" transform="scale(0.950,1)">M</text>
<text x="800.03" y="588" transform="scale(1.065,1)">o</text>
<text x="807.54" y="588" transform="scale(1.065,1)">n</text>
<text x="651.15" y="588" transform="scale(1.333,1)">i</text>
<text x="654.42" y="588" transform="scale(1.333,1)">t</text>
<text x="823.50" y="588" transform="scale(1.065,1)">o</text>
<text x="796.11" y="588" transform="scale(1.112,1)">r</text>
<text x="885.38" y="609" transform="scale(0.950,1)">G</text>
<text x="799.09" y="609" transform="scale(1.065,1)">o</text>
<text x="644.39" y="609" transform="scale(1.333,1)">l</text>
<text x="810.36" y="609" transform="scale(1.065,1)">d</text>
<text x="817.87" y="609" transform="scale(1.065,1)">e</text>
<text x="825.38" y="609" transform="scale(1.065,1)">n</text>
<text x="885.43" y="630" transform="scale(0.950,1)">O</text>
<text x="638.67" y="630" transform="scale(1.333,1)">f</text>
<text x="642.42" y="630" transform="scale(1.333,1)">f</text>
<text x="906.73" y="630" transform="scale(0.950,1)">s</text>
<text x="815.05" y="630" transform="scale(1.065,1)">e</text>
<text x="657.43" y="630" transform="scale(1.333,1)">t</text>
<text x="830.21" y="630" transform="scale(1.066,1)">/</text>
<text x="939.32 948.53" y="630" transform="scale(0.950,1)">SP</text>
<text x="884.90" y="651" transform="scale(0.950,1)">S</text>
<text x="797.22" y="651" transform="scale(1.065,1)">a</text>
<text x="723.47" y="651" transform="scale(1.185,1)">v</text>
<text x="812.24" y="651" transform="scale(1.065,1)">e</text>
<text x="819.75" y="651" transform="scale(1.065,1)">d</text>
<text x="932.11" y="651" transform="scale(0.950,1)">D</text>
<text x="840.40" y="651" transform="scale(1.065,1)">a</text>
<text x="677.69" y="651" transform="scale(1.333,1)">t</text>
<text x="852.61" y="651" transform="scale(1.065,1)">a</text>
<text x="884.70" y="673" transform="scale(0.950,1)">F</text>
<text x="636.14" y="673" transform="scale(1.333,1)">i</text>
<text x="639.14" y="673" transform="scale(1.333,1)">l</text>
<text x="803.79" y="673" transform="scale(1.065,1)">e</text>
<text x="1120.41" y="566" transform="scale(0.950,1)">C</text>
<text x="1007.99" y="566" transform="scale(1.065,1)">h</text>
<text x="1015.50" y="566" transform="scale(1.065,1)">a</text>
<text x="1023.01" y="566" transform="scale(1.065,1)">n</text>
<text x="1030.52" y="566" transform="scale(1.065,1)">n</text>
<text x="1038.04" y="566" transform="scale(1.065,1)">e</text>
<text x="835.30" y="566" transform="scale(1.333,1)">l</text>
<text x="1180.89" y="566" transform="scale(0.950,1)">B</text>
<text x="1090.86" y="589" transform="scale(0.950,1)">M</text>
<text x="983.11" y="589" transform="scale(1.065,1)">o</text>
<text x="990.62" y="589" transform="scale(1.065,1)">n</text>
<text x="797.42" y="589" transform="scale(1.333,1)">i</text>
<text x="800.76" y="589" transform="scale(1.333,1)">t</text>
<text x="1006.58" y="589" transform="scale(1.065,1)">o</text>
<text x="971.51" y="589" transform="scale(1.112,1)">r</text>
<text x="1090.65" y="610" transform="scale(0.950,1)">G</text>
<text x="982.17" y="610" transform="scale(1.065,1)">o</text>
<text x="790.67" y="610" transform="scale(1.333,1)">l</text>
<text x="993.44" y="610" transform="scale(1.065,1)">d</text>
<text x="1000.95" y="610" transform="scale(1.065,1)">e</text>
<text x="1008.46" y="610" transform="scale(1.065,1)">n</text>
<text x="1090.69" y="632" transform="scale(0.950,1)">O</text>
<text x="785.00" y="632" transform="scale(1.333,1)">f</text>
<text x="788.75" y="632" transform="scale(1.333,1)">f</text>
<text x="1111.99" y="632" transform="scale(0.950,1)">s</text>
<text x="998.13" y="632" transform="scale(1.065,1)">e</text>
<text x="803.76" y="632" transform="scale(1.333,1)">t</text>
<text x="1013.13" y="632" transform="scale(1.066,1)">/</text>
<text x="1144.58 1153.79" y="632" transform="scale(0.950,1)">SP</text>
<text x="1090.16" y="652" transform="scale(0.950,1)">S</text>
<text x="980.30" y="652" transform="scale(1.065,1)">a</text>
<text x="888.07" y="652" transform="scale(1.185,1)">v</text>
<text x="995.32" y="652" transform="scale(1.065,1)">e</text>
<text x="1002.83" y="652" transform="scale(1.065,1)">d</text>
<text x="1137.38" y="652" transform="scale(0.950,1)">D</text>
<text x="1023.48" y="652" transform="scale(1.065,1)">a</text>
<text x="824.02" y="652" transform="scale(1.333,1)">t</text>
<text x="1035.69" y="652" transform="scale(1.065,1)">a</text>
<text x="1089.96" y="673" transform="scale(0.950,1)">F</text>
<text x="782.42" y="673" transform="scale(1.333,1)">i</text>
<text x="785.42" y="673" transform="scale(1.333,1)">l</text>
<text x="986.87" y="673" transform="scale(1.065,1)">e</text>
<text x="1320.03" y="578" transform="scale(0.950,1)">S</text>
<text x="1206.36" y="578" transform="scale(1.047,1)">a</text>
<text x="1091.31" y="578" transform="scale(1.164,1)">v</text>
<text x="1221.39" y="578" transform="scale(1.047,1)">e</text>
<text x="1358.20" y="578" transform="scale(0.950,1)">D</text>
<text x="1242.04" y="578" transform="scale(1.047,1)">a</text>
<text x="998.71" y="578" transform="scale(1.309,1)">t</text>
<text x="1254.25" y="578" transform="scale(1.047,1)">a</text>
<text x="1309.34 1317.44 1325.55 1333.67 1341.48 1345.69 1355.97" y="612" transform="scale(0.950,1)">Load Da</text>
<text x="1004.57" y="612" transform="scale(1.290,1)">t</text>
<text x="1369.20 1377.14 1380.22" y="612" transform="scale(0.950,1)">a F</text>
<text x="1022.16" y="612" transform="scale(1.290,1)">i</text>
<text x="1025.16" y="612" transform="scale(1.290,1)">l</text>
<text x="1396.71" y="612" transform="scale(0.950,1)">e</text>
<text x="1183.24" y="647" font-size="10.2" transform="scale(1.014,1)">2</text>
<text x="1189.09" y="647" font-size="10.2" transform="scale(1.014,1)">6</text>
<text x="1316.41 1320.26" y="647" font-size="10.2" transform="scale(0.920,1)">-M</text>
<text x="1205.66" y="647" font-size="10.2" transform="scale(1.014,1)">a</text>
<text x="1335.36 1340.92" y="647" font-size="10.2" transform="scale(0.920,1)">y-</text>
<text x="1219.30" y="647" font-size="10.2" transform="scale(1.014,1)">2</text>
<text x="1225.15" y="647" font-size="10.2" transform="scale(1.014,1)">0</text>
<text x="1231.00" y="647" font-size="10.2" transform="scale(1.014,1)">2</text>
<text x="1236.85" y="647" font-size="10.2" transform="scale(1.014,1)">3</text>
<text x="1245.62" y="647" font-size="10.2" transform="scale(1.014,1)">1</text>
<text x="1251.47" y="647" font-size="10.2" transform="scale(1.014,1)">4</text>
<text x="1256.14" y="647" font-size="10.2" transform="scale(1.015,1)">:</text>
<text x="1260.24" y="647" font-size="10.2" transform="scale(1.014,1)">5</text>
<text x="1266.09" y="647" font-size="10.2" transform="scale(1.014,1)">8</text>
<text x="1270.75" y="647" font-size="10.2" transform="scale(1.015,1)">:</text>
<text x="1274.86" y="647" font-size="10.2" transform="scale(1.014,1)">5</text>
<text x="1280.71" y="647" font-size="10.2" transform="scale(1.014,1)">5</text>
</svg>
</body></html>
